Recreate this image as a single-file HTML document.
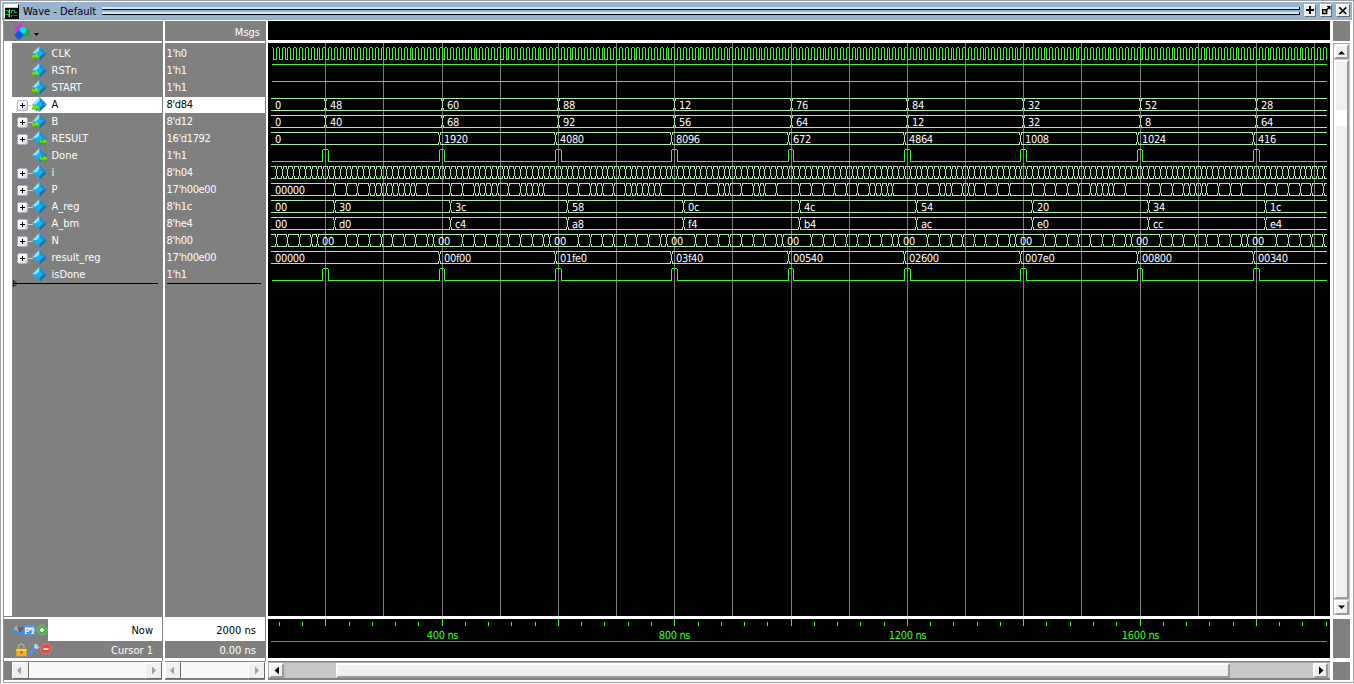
<!DOCTYPE html>
<html><head><meta charset="utf-8"><title>Wave - Default</title>
<style>
html,body{margin:0;padding:0;background:#fff;overflow:hidden}
#w{position:relative;width:1354px;height:684px;background:#fff;overflow:hidden;font-family:"DejaVu Sans Condensed","DejaVu Sans","Liberation Sans",sans-serif;font-stretch:condensed;font-size:11px;line-height:17px;color:#fff}
#w div{position:absolute;box-sizing:border-box}
.g{background:#808080}
.k{background:#000}
.wh{background:#fff}
.t{white-space:nowrap;height:17px}
.sel{background:#fff}
.wv{position:absolute;left:0;top:0}
.ic{display:block}
.dia{width:16px;height:16px}
.pm{width:11px;height:11px;border:1px solid #a9b1c6;border-radius:2px;background:linear-gradient(135deg,#fff 40%,#ccd3e6)}
.pm i{position:absolute;left:2px;top:4px;width:5px;height:1px;background:#000;display:block}
.pm b{position:absolute;left:4px;top:2px;width:1px;height:5px;background:#000;display:block}
.pl{width:5px;height:1px;background:#d0d0d0}
.btn{background:#f0f0f0;border:1px solid;border-color:#fff #6a6a6a #6a6a6a #fff}
.tr{background:#f8f8f8 repeating-conic-gradient(#fff 0 25%,#f0f0f0 0 50%) 0 0/2px 2px}
.b2{background:#f0f0f0;border:2px solid;border-color:#fff #9a9a9a #9a9a9a #fff}
</style></head><body><div id="w">
<svg width="0" height="0" style="position:absolute"><defs><linearGradient id="ag" x1="0" y1="0" x2="0" y2="1"><stop offset="0" stop-color="#d4ff30"/><stop offset=".5" stop-color="#58d800"/><stop offset="1" stop-color="#0a7a00"/></linearGradient></defs></svg>
<!-- frame -->
<div style="left:0;top:0;width:1354px;height:684px;background:#fff;border:1px solid #a0a0a0;border-right-color:#a8a8a8;border-bottom-color:#fff"></div>
<div class="wh" style="left:1px;top:1px;width:1352px;height:682px"></div>
<div style="left:3px;top:20px;width:1px;height:662px;background:#909090"></div>
<div style="left:3px;top:682px;width:1350px;height:1px;background:#a0a0a0"></div>
<!-- title bar -->
<div style="left:2px;top:2px;width:1350px;height:18px;background:#99b4d1"></div>
<div style="left:102px;top:7px;width:1198px;height:2px;background:#c4f0ff"></div>
<div style="left:102px;top:9px;width:1198px;height:1px;background:#000"></div>
<div style="left:102px;top:12px;width:1198px;height:2px;background:#c4f0ff"></div>
<div style="left:102px;top:14px;width:1198px;height:1px;background:#000"></div>
<div style="left:1299px;top:7px;width:1px;height:3px;background:#000"></div><div style="left:1299px;top:12px;width:1px;height:3px;background:#000"></div>
<div class="t" style="left:23px;top:3px;color:#000;line-height:18px;height:18px">Wave - Default</div>
<!-- title icon -->
<div style="left:4px;top:4px;width:15px;height:15px;background:#000;border:1px solid #fff;border-right-color:#000;border-bottom-color:#000">
<svg width="13" height="13" viewBox="0 0 13 13" style="display:block" shape-rendering="crispEdges"><rect width="13" height="2" fill="#fff"/><rect y="2" width="13" height="1" fill="#c8c8c8"/><path d="M0 5.500h3v2h2M0 9.500h3v2" fill="none" stroke="#00b040"/><path d="M4.500 4v8" stroke="#30e0f0"/><path d="M6 7.500v-2h3v2h3M6 9.500v2h1" fill="none" stroke="#00b040"/><path d="M7 10.500h5" stroke="#5028f0"/></svg></div>
<!-- title buttons -->
<div class="btn" style="left:1304px;top:4px;width:12px;height:13px"></div>
<div class="btn" style="left:1320px;top:4px;width:12px;height:13px"></div>
<div class="btn" style="left:1336px;top:4px;width:14px;height:13px"></div>
<svg class="wv" width="1354" height="24" viewBox="0 0 1354 24"><path d="M1306 9h8v2h-8zM1309 6h2v8h-2z" fill="#000" shape-rendering="crispEdges"/>
<path d="M1322.700 9.700h4v3.800h-4z" fill="none" stroke="#000" stroke-width="1.400"/><path d="M1325 11.500l4.500-4.500" fill="none" stroke="#000" stroke-width="1.500"/><path d="M1326.500 6h4v4z" fill="#000"/>
<path d="M1339.300 7.300l7 6.700M1346.300 7.300l-7 6.700" stroke="#000" stroke-width="1.600" fill="none"/></svg>
<!-- panels -->
<div class="g" style="left:4px;top:21px;width:158px;height:20px"></div>
<div class="g" style="left:12px;top:43px;width:150px;height:573px"></div>
<div class="g" style="left:162px;top:21px;width:1px;height:640px"></div>
<div class="g" style="left:165px;top:21px;width:100px;height:20px"></div>
<div class="g" style="left:165px;top:43px;width:100px;height:573px"></div>
<div class="g" style="left:265px;top:21px;width:1px;height:640px"></div>
<div class="k" style="left:268px;top:21px;width:1062px;height:19px"></div>
<div class="k" style="left:268px;top:43px;width:1062px;height:573px"></div>
<div class="k" style="left:268px;top:619px;width:1062px;height:39px"></div>
<div class="g" style="left:1333px;top:21px;width:17px;height:20px"></div>
<div class="g" style="left:1333px;top:619px;width:17px;height:39px"></div>
<div class="g" style="left:1333px;top:662px;width:17px;height:18px"></div>
<!-- header content -->
<div class="t" style="left:165px;top:24px;width:95px;text-align:right">Msgs</div>
<svg class="wv" width="60" height="44" viewBox="0 0 60 44"><polygon points="20.3,23.700 23.200,26.400 17,31.800 14,29.700" fill="#d828e8"/><rect x="22" y="29.300" width="8" height="7.500" fill="#1ca84c"/><circle cx="23" cy="30.200" r="3.300" fill="#00e4f4" stroke="#6c98b4" stroke-width=".7"/><polygon points="19,30.200 23.900,35.100 19,40 14,35.100" fill="#0858f0"/><polygon points="34,33 39,33 36.500,36" fill="#000"/></svg>
<!-- bottom-left panel -->
<div class="g" style="left:4px;top:616px;width:158px;height:1px"></div>
<div class="g" style="left:165px;top:616px;width:100px;height:1px"></div>
<div class="g" style="left:4px;top:619px;width:158px;height:39px"></div>
<div class="g" style="left:165px;top:619px;width:100px;height:39px"></div>
<div class="wh" style="left:48px;top:619px;width:114px;height:22px"></div>
<div class="wh" style="left:165px;top:619px;width:100px;height:22px"></div>
<div class="t" style="left:48px;top:622px;width:105px;text-align:right;color:#000">Now</div>
<div class="t" style="left:165px;top:622px;width:91px;text-align:right;color:#000">2000 ns</div>
<div class="t" style="left:48px;top:642px;width:105px;text-align:right">Cursor 1</div>
<div class="t" style="left:165px;top:642px;width:91px;text-align:right">0.00 ns</div>
<svg class="wv" style="left:12px;top:620px" width="40" height="38" viewBox="0 0 40 38">
<text x="1.500" y="11" font-size="7" font-weight="bold" fill="#b4b4b4" font-family='"DejaVu Sans Condensed","DejaVu Sans","Liberation Sans",sans-serif'>A</text><text x="6" y="11.500" font-size="7" font-weight="bold" fill="#4a4a4a" font-family='"DejaVu Sans Condensed","DejaVu Sans","Liberation Sans",sans-serif'>V</text>
<path d="M1.500 12.500h9" stroke="#3a8cf0" stroke-width="1.300"/><path d="M3.500 10.500l-2.200 2l2.200 2M8.500 10.500l2.200 2l-2.200 2" stroke="#3a8cf0" fill="none" stroke-width="1.200"/>
<rect x="12.500" y="5.500" width="10" height="9" fill="#e8f0fa" stroke="#5a90e0"/><rect x="12.500" y="5.500" width="10" height="2" fill="#5a90e0"/><path d="M14 10h3M14 12.500h3" stroke="#6a9ae0"/><path d="M15.500 15l4-4" stroke="#5a8ee0" stroke-width="3" stroke-linecap="round"/><circle cx="21" cy="10" r="1.800" fill="#d8d8d8"/>
<circle cx="30" cy="10" r="5" fill="#4cb04c" stroke="#7cc87c" stroke-width=".8"/><path d="M28 10h4M30 8v4" stroke="#fff" stroke-width="1.800"/>
<path d="M6.500 30v-3a2.800 2.800 0 0 1 5.600 0v1" fill="none" stroke="#b0b0b0" stroke-width="1.300"/><rect x="4.500" y="29" width="10" height="7" fill="#f0b428" stroke="#e8a010" stroke-width=".6"/><rect x="4.500" y="29" width="10" height="2" fill="#f8d060"/><rect x="8.500" y="31" width="2" height="3" fill="#a87000"/>
<path d="M17.500 34l6-6" stroke="#5a8ee0" stroke-width="3.400" stroke-linecap="round"/><path d="M23 28l2.500-3" stroke="#d8d8d8" stroke-width="2"/><path d="M24 24a2.200 2.200 0 1 0 3 3" fill="none" stroke="#d8d8d8" stroke-width="1.400"/>
<circle cx="34" cy="29" r="5" fill="#e8483c" stroke="#f07a70" stroke-width=".8"/><rect x="31.500" y="28.200" width="5" height="1.700" fill="#fff"/>
</svg>
<!-- scrollbars bottom -->
<div class="g" style="left:4px;top:661px;width:158px;height:19px"></div>
<div class="g" style="left:165px;top:661px;width:100px;height:19px"></div>
<div class="g" style="left:268px;top:661px;width:1062px;height:19px"></div>
<div class="tr" style="left:12px;top:662px;width:150px;height:16px"></div>
<div class="btn" style="left:12px;top:662px;width:17px;height:17px"></div>
<div class="btn" style="left:145px;top:662px;width:17px;height:17px"></div>
<div class="tr" style="left:165px;top:662px;width:100px;height:16px"></div>
<div class="btn" style="left:165px;top:662px;width:16px;height:17px"></div>
<div class="btn" style="left:248px;top:662px;width:17px;height:17px"></div>
<div style="left:268px;top:662px;width:1062px;height:16px;background:#c8c8c8;border-top:1px solid #a8a8a8;border-left:1px solid #a8a8a8"></div>
<div class="b2" style="left:269px;top:663px;width:15px;height:15px"></div>
<div class="b2" style="left:1313px;top:663px;width:15px;height:15px"></div>
<div class="b2" style="left:336px;top:663px;width:894px;height:15px"></div>
<div style="left:285px;top:663px;width:1px;height:15px;background:#f8c800"></div>

<!-- vertical scrollbar -->
<div style="left:1333px;top:43px;width:17px;height:572px;background:#c8c8c8;border-top:1px solid #a8a8a8;border-left:1px solid #a8a8a8"></div>
<div class="b2" style="left:1334px;top:44px;width:15px;height:15px"></div>
<div class="b2" style="left:1334px;top:60px;width:15px;height:539px"></div>
<div class="b2" style="left:1334px;top:600px;width:15px;height:15px"></div>
<div class="wh" style="left:1336px;top:110px;width:11px;height:16px"></div>
<svg class="wv" width="1354" height="684" viewBox="0 0 1354 684"><g fill="#a0a0a0"><polygon points="17,670.5 21,666.500 21,674.500"/><polygon points="156,670.5 152,666.500 152,674.500"/><polygon points="170,670.5 174,666.500 174,674.500"/><polygon points="259,670.5 255,666.500 255,674.500"/></g>
<g fill="#000"><polygon points="274.500,670.500 279,666.500 279,674.500"/><polygon points="1323.500,670.500 1319,666.500 1319,674.500"/><polygon points="1338,54.500 1345,54.500 1341.500,51"/><polygon points="1338,605.500 1345,605.500 1341.500,609"/></g></svg>
<!-- rows -->
<div class="dia" style="left:32px;top:46px"><svg class="ic" width="16" height="16" viewBox="0 0 16 16">
<polygon points="7.5,0 7.5,7.5 0,7.5" fill="#9adff8"/>
<polygon points="7.5,0 15,7.5 7.5,7.5" fill="#1c8fd4"/>
<polygon points="0,7.5 7.5,7.5 7.5,15" fill="#2ba2de"/>
<polygon points="7.5,7.5 15,7.5 7.5,15" fill="#1374b4"/>
<polygon points="7.5,3.9 11.100,7.5 7.5,11.100 3.900,7.5" fill="#12b6ee"/>
<path d="M0 9.6h3.8V7.6l3.6 3.4l-3.6 3.9V12.6H0z" fill="url(#ag)"/></svg></div>
<div class="t" style="left:51.5px;top:45px;color:#fff">CLK</div>
<div class="t" style="left:166.5px;top:45px;color:#fff;letter-spacing:-0.35px">1'h0</div>
<div class="dia" style="left:32px;top:63px"><svg class="ic" width="16" height="16" viewBox="0 0 16 16">
<polygon points="7.5,0 7.5,7.5 0,7.5" fill="#9adff8"/>
<polygon points="7.5,0 15,7.5 7.5,7.5" fill="#1c8fd4"/>
<polygon points="0,7.5 7.5,7.5 7.5,15" fill="#2ba2de"/>
<polygon points="7.5,7.5 15,7.5 7.5,15" fill="#1374b4"/>
<polygon points="7.5,3.9 11.100,7.5 7.5,11.100 3.900,7.5" fill="#12b6ee"/>
<path d="M0 9.6h3.8V7.6l3.6 3.4l-3.6 3.9V12.6H0z" fill="url(#ag)"/></svg></div>
<div class="t" style="left:51.5px;top:62px;color:#fff">RSTn</div>
<div class="t" style="left:166.5px;top:62px;color:#fff;letter-spacing:-0.35px">1'h1</div>
<div class="dia" style="left:32px;top:80px"><svg class="ic" width="16" height="16" viewBox="0 0 16 16">
<polygon points="7.5,0 7.5,7.5 0,7.5" fill="#9adff8"/>
<polygon points="7.5,0 15,7.5 7.5,7.5" fill="#1c8fd4"/>
<polygon points="0,7.5 7.5,7.5 7.5,15" fill="#2ba2de"/>
<polygon points="7.5,7.5 15,7.5 7.5,15" fill="#1374b4"/>
<polygon points="7.5,3.9 11.100,7.5 7.5,11.100 3.900,7.5" fill="#12b6ee"/>
<path d="M0 9.6h3.8V7.6l3.6 3.4l-3.6 3.9V12.6H0z" fill="url(#ag)"/></svg></div>
<div class="t" style="left:51.5px;top:79px;color:#fff">START</div>
<div class="t" style="left:166.5px;top:79px;color:#fff;letter-spacing:-0.35px">1'h1</div>
<div class="sel" style="left:12px;top:97px;width:150px;height:16px"></div>
<div class="sel" style="left:165px;top:97px;width:100px;height:16px"></div>
<div class="pm" style="left:17px;top:100px"><i></i><b></b></div><div class="pl" style="left:28px;top:105px"></div>
<div class="dia" style="left:32px;top:97px"><svg class="ic" width="16" height="16" viewBox="0 0 16 16">
<polygon points="7.5,0 7.5,7.5 0,7.5" fill="#9adff8"/>
<polygon points="7.5,0 15,7.5 7.5,7.5" fill="#1c8fd4"/>
<polygon points="0,7.5 7.5,7.5 7.5,15" fill="#2ba2de"/>
<polygon points="7.5,7.5 15,7.5 7.5,15" fill="#1374b4"/>
<polygon points="7.5,3.9 11.100,7.5 7.5,11.100 3.900,7.5" fill="#12b6ee"/>
<path d="M0 9.6h3.8V7.6l3.6 3.4l-3.6 3.9V12.6H0z" fill="url(#ag)"/></svg></div>
<div class="t" style="left:51.5px;top:96px;color:#000">A</div>
<div class="t" style="left:166.5px;top:96px;color:#000;letter-spacing:-0.35px">8'd84</div>
<div class="pm" style="left:17px;top:117px"><i></i><b></b></div><div class="pl" style="left:28px;top:122px"></div>
<div class="dia" style="left:32px;top:114px"><svg class="ic" width="16" height="16" viewBox="0 0 16 16">
<polygon points="7.5,0 7.5,7.5 0,7.5" fill="#9adff8"/>
<polygon points="7.5,0 15,7.5 7.5,7.5" fill="#1c8fd4"/>
<polygon points="0,7.5 7.5,7.5 7.5,15" fill="#2ba2de"/>
<polygon points="7.5,7.5 15,7.5 7.5,15" fill="#1374b4"/>
<polygon points="7.5,3.9 11.100,7.5 7.5,11.100 3.900,7.5" fill="#12b6ee"/>
<path d="M0 9.6h3.8V7.6l3.6 3.4l-3.6 3.9V12.6H0z" fill="url(#ag)"/></svg></div>
<div class="t" style="left:51.5px;top:113px;color:#fff">B</div>
<div class="t" style="left:166.5px;top:113px;color:#fff;letter-spacing:-0.35px">8'd12</div>
<div class="pm" style="left:17px;top:134px"><i></i><b></b></div><div class="pl" style="left:28px;top:139px"></div>
<div class="dia" style="left:32px;top:131px"><svg class="ic" width="16" height="16" viewBox="0 0 16 16">
<polygon points="7.5,0 7.5,7.5 0,7.5" fill="#9adff8"/>
<polygon points="7.5,0 15,7.5 7.5,7.5" fill="#1c8fd4"/>
<polygon points="0,7.5 7.5,7.5 7.5,15" fill="#2ba2de"/>
<polygon points="7.5,7.5 15,7.5 7.5,15" fill="#1374b4"/>
<polygon points="7.5,3.9 11.100,7.5 7.5,11.100 3.900,7.5" fill="#12b6ee"/>
<path d="M8 9.600h3.800V7.600l3.600 3.400l-3.600 3.900V12.600H8z" fill="url(#ag)"/></svg></div>
<div class="t" style="left:51.5px;top:130px;color:#fff">RESULT</div>
<div class="t" style="left:166.5px;top:130px;color:#fff;letter-spacing:-0.35px">16'd1792</div>
<div class="dia" style="left:32px;top:148px"><svg class="ic" width="16" height="16" viewBox="0 0 16 16">
<polygon points="7.5,0 7.5,7.5 0,7.5" fill="#9adff8"/>
<polygon points="7.5,0 15,7.5 7.5,7.5" fill="#1c8fd4"/>
<polygon points="0,7.5 7.5,7.5 7.5,15" fill="#2ba2de"/>
<polygon points="7.5,7.5 15,7.5 7.5,15" fill="#1374b4"/>
<polygon points="7.5,3.9 11.100,7.5 7.5,11.100 3.900,7.5" fill="#12b6ee"/>
<path d="M8 9.600h3.800V7.600l3.600 3.400l-3.600 3.900V12.600H8z" fill="url(#ag)"/></svg></div>
<div class="t" style="left:51.5px;top:147px;color:#fff">Done</div>
<div class="t" style="left:166.5px;top:147px;color:#fff;letter-spacing:-0.35px">1'h1</div>
<div class="pm" style="left:17px;top:168px"><i></i><b></b></div><div class="pl" style="left:28px;top:173px"></div>
<div class="dia" style="left:32px;top:165px"><svg class="ic" width="16" height="16" viewBox="0 0 16 16">
<polygon points="7.5,0 7.5,7.5 0,7.5" fill="#9adff8"/>
<polygon points="7.5,0 15,7.5 7.5,7.5" fill="#1c8fd4"/>
<polygon points="0,7.5 7.5,7.5 7.5,15" fill="#2ba2de"/>
<polygon points="7.5,7.5 15,7.5 7.5,15" fill="#1374b4"/>
<polygon points="7.5,3.9 11.100,7.5 7.5,11.100 3.900,7.5" fill="#12b6ee"/>
</svg></div>
<div class="t" style="left:51.5px;top:164px;color:#fff">i</div>
<div class="t" style="left:166.5px;top:164px;color:#fff;letter-spacing:-0.35px">8'h04</div>
<div class="pm" style="left:17px;top:185px"><i></i><b></b></div><div class="pl" style="left:28px;top:190px"></div>
<div class="dia" style="left:32px;top:182px"><svg class="ic" width="16" height="16" viewBox="0 0 16 16">
<polygon points="7.5,0 7.5,7.5 0,7.5" fill="#9adff8"/>
<polygon points="7.5,0 15,7.5 7.5,7.5" fill="#1c8fd4"/>
<polygon points="0,7.5 7.5,7.5 7.5,15" fill="#2ba2de"/>
<polygon points="7.5,7.5 15,7.5 7.5,15" fill="#1374b4"/>
<polygon points="7.5,3.9 11.100,7.5 7.5,11.100 3.900,7.5" fill="#12b6ee"/>
</svg></div>
<div class="t" style="left:51.5px;top:181px;color:#fff">P</div>
<div class="t" style="left:166.5px;top:181px;color:#fff;letter-spacing:-0.35px">17'h00e00</div>
<div class="pm" style="left:17px;top:202px"><i></i><b></b></div><div class="pl" style="left:28px;top:207px"></div>
<div class="dia" style="left:32px;top:199px"><svg class="ic" width="16" height="16" viewBox="0 0 16 16">
<polygon points="7.5,0 7.5,7.5 0,7.5" fill="#9adff8"/>
<polygon points="7.5,0 15,7.5 7.5,7.5" fill="#1c8fd4"/>
<polygon points="0,7.5 7.5,7.5 7.5,15" fill="#2ba2de"/>
<polygon points="7.5,7.5 15,7.5 7.5,15" fill="#1374b4"/>
<polygon points="7.5,3.9 11.100,7.5 7.5,11.100 3.900,7.5" fill="#12b6ee"/>
</svg></div>
<div class="t" style="left:51.5px;top:198px;color:#fff">A_reg</div>
<div class="t" style="left:166.5px;top:198px;color:#fff;letter-spacing:-0.35px">8'h1c</div>
<div class="pm" style="left:17px;top:219px"><i></i><b></b></div><div class="pl" style="left:28px;top:224px"></div>
<div class="dia" style="left:32px;top:216px"><svg class="ic" width="16" height="16" viewBox="0 0 16 16">
<polygon points="7.5,0 7.5,7.5 0,7.5" fill="#9adff8"/>
<polygon points="7.5,0 15,7.5 7.5,7.5" fill="#1c8fd4"/>
<polygon points="0,7.5 7.5,7.5 7.5,15" fill="#2ba2de"/>
<polygon points="7.5,7.5 15,7.5 7.5,15" fill="#1374b4"/>
<polygon points="7.5,3.9 11.100,7.5 7.5,11.100 3.900,7.5" fill="#12b6ee"/>
</svg></div>
<div class="t" style="left:51.5px;top:215px;color:#fff">A_bm</div>
<div class="t" style="left:166.5px;top:215px;color:#fff;letter-spacing:-0.35px">8'he4</div>
<div class="pm" style="left:17px;top:236px"><i></i><b></b></div><div class="pl" style="left:28px;top:241px"></div>
<div class="dia" style="left:32px;top:233px"><svg class="ic" width="16" height="16" viewBox="0 0 16 16">
<polygon points="7.5,0 7.5,7.5 0,7.5" fill="#9adff8"/>
<polygon points="7.5,0 15,7.5 7.5,7.5" fill="#1c8fd4"/>
<polygon points="0,7.5 7.5,7.5 7.5,15" fill="#2ba2de"/>
<polygon points="7.5,7.5 15,7.5 7.5,15" fill="#1374b4"/>
<polygon points="7.5,3.9 11.100,7.5 7.5,11.100 3.900,7.5" fill="#12b6ee"/>
</svg></div>
<div class="t" style="left:51.5px;top:232px;color:#fff">N</div>
<div class="t" style="left:166.5px;top:232px;color:#fff;letter-spacing:-0.35px">8'h00</div>
<div class="pm" style="left:17px;top:253px"><i></i><b></b></div><div class="pl" style="left:28px;top:258px"></div>
<div class="dia" style="left:32px;top:250px"><svg class="ic" width="16" height="16" viewBox="0 0 16 16">
<polygon points="7.5,0 7.5,7.5 0,7.5" fill="#9adff8"/>
<polygon points="7.5,0 15,7.5 7.5,7.5" fill="#1c8fd4"/>
<polygon points="0,7.5 7.5,7.5 7.5,15" fill="#2ba2de"/>
<polygon points="7.5,7.5 15,7.5 7.5,15" fill="#1374b4"/>
<polygon points="7.5,3.9 11.100,7.5 7.5,11.100 3.900,7.5" fill="#12b6ee"/>
</svg></div>
<div class="t" style="left:51.5px;top:249px;color:#fff">result_reg</div>
<div class="t" style="left:166.5px;top:249px;color:#fff;letter-spacing:-0.35px">17'h00e00</div>
<div class="dia" style="left:32px;top:267px"><svg class="ic" width="16" height="16" viewBox="0 0 16 16">
<polygon points="7.5,0 7.5,7.5 0,7.5" fill="#9adff8"/>
<polygon points="7.5,0 15,7.5 7.5,7.5" fill="#1c8fd4"/>
<polygon points="0,7.5 7.5,7.5 7.5,15" fill="#2ba2de"/>
<polygon points="7.5,7.5 15,7.5 7.5,15" fill="#1374b4"/>
<polygon points="7.5,3.9 11.100,7.5 7.5,11.100 3.900,7.5" fill="#12b6ee"/>
</svg></div>
<div class="t" style="left:51.5px;top:266px;color:#fff">isDone</div>
<div class="t" style="left:166.5px;top:266px;color:#fff;letter-spacing:-0.35px">1'h1</div>
<div style="left:14px;top:283px;width:144px;height:1px;background:#000"></div>
<div style="left:167px;top:283px;width:94px;height:1px;background:#000"></div>
<svg class="wv" style="left:13px;top:280px" width="5" height="7" viewBox="0 0 5 7"><path d="M.5.500v6l4-3z" fill="none" stroke="#000" stroke-width=".8"/></svg>
<svg class="wv" width="1354" height="684" viewBox="0 0 1354 684" shape-rendering="crispEdges">
<path fill="#7d7d7d" d="M325 43h1v573h-1zM383 43h1v573h-1zM442 43h1v573h-1zM500 43h1v573h-1zM558 43h1v573h-1zM616 43h1v573h-1zM674 43h1v573h-1zM732 43h1v573h-1zM791 43h1v573h-1zM849 43h1v573h-1zM907 43h1v573h-1zM965 43h1v573h-1zM1023 43h1v573h-1zM1081 43h1v573h-1zM1140 43h1v573h-1zM1198 43h1v573h-1zM1256 43h1v573h-1zM1314 43h1v573h-1z"/>
<path fill="#30ff18" d="M272 47h1v1h-1zM273 48h1v12h-1zM273 59h4v1h-4zM276 48h1v12h-1zM277 47h2v1h-2zM279 48h1v12h-1zM279 59h4v1h-4zM282 48h1v12h-1zM283 47h2v1h-2zM285 48h1v12h-1zM285 59h3v1h-3zM287 48h1v12h-1zM288 47h2v1h-2zM290 48h1v12h-1zM290 59h4v1h-4zM293 48h1v12h-1zM294 47h2v1h-2zM296 48h1v12h-1zM296 59h4v1h-4zM299 48h1v12h-1zM300 47h2v1h-2zM302 48h1v12h-1zM302 59h4v1h-4zM305 48h1v12h-1zM306 47h2v1h-2zM308 48h1v12h-1zM308 59h4v1h-4zM311 48h1v12h-1zM312 47h2v1h-2zM314 48h1v12h-1zM314 59h4v1h-4zM317 48h1v12h-1zM318 47h1v1h-1zM319 48h1v12h-1zM319 59h4v1h-4zM322 48h1v12h-1zM323 47h2v1h-2zM325 48h1v12h-1zM325 59h4v1h-4zM328 48h1v12h-1zM329 47h2v1h-2zM331 48h1v12h-1zM331 59h4v1h-4zM334 48h1v12h-1zM335 47h2v1h-2zM337 48h1v12h-1zM337 59h4v1h-4zM340 48h1v12h-1zM341 47h2v1h-2zM343 48h1v12h-1zM343 59h4v1h-4zM346 48h1v12h-1zM347 47h2v1h-2zM349 48h1v12h-1zM349 59h3v1h-3zM351 48h1v12h-1zM352 47h2v1h-2zM354 48h1v12h-1zM354 59h4v1h-4zM357 48h1v12h-1zM358 47h2v1h-2zM360 48h1v12h-1zM360 59h4v1h-4zM363 48h1v12h-1zM364 47h2v1h-2zM366 48h1v12h-1zM366 59h4v1h-4zM369 48h1v12h-1zM370 47h2v1h-2zM372 48h1v12h-1zM372 59h4v1h-4zM375 48h1v12h-1zM376 47h2v1h-2zM378 48h1v12h-1zM378 59h4v1h-4zM381 48h1v12h-1zM382 47h1v1h-1zM383 48h1v12h-1zM383 59h4v1h-4zM386 48h1v12h-1zM387 47h2v1h-2zM389 48h1v12h-1zM389 59h4v1h-4zM392 48h1v12h-1zM393 47h2v1h-2zM395 48h1v12h-1zM395 59h4v1h-4zM398 48h1v12h-1zM399 47h2v1h-2zM401 48h1v12h-1zM401 59h4v1h-4zM404 48h1v12h-1zM405 47h2v1h-2zM407 48h1v12h-1zM407 59h4v1h-4zM410 48h1v12h-1zM411 47h1v1h-1zM412 48h1v12h-1zM412 59h4v1h-4zM415 48h1v12h-1zM416 47h2v1h-2zM418 48h1v12h-1zM418 59h4v1h-4zM421 48h1v12h-1zM422 47h2v1h-2zM424 48h1v12h-1zM424 59h4v1h-4zM427 48h1v12h-1zM428 47h2v1h-2zM430 48h1v12h-1zM430 59h4v1h-4zM433 48h1v12h-1zM434 47h2v1h-2zM436 48h1v12h-1zM436 59h4v1h-4zM439 48h1v12h-1zM440 47h2v1h-2zM442 48h1v12h-1zM442 59h3v1h-3zM444 48h1v12h-1zM445 47h2v1h-2zM447 48h1v12h-1zM447 59h4v1h-4zM450 48h1v12h-1zM451 47h2v1h-2zM453 48h1v12h-1zM453 59h4v1h-4zM456 48h1v12h-1zM457 47h2v1h-2zM459 48h1v12h-1zM459 59h4v1h-4zM462 48h1v12h-1zM463 47h2v1h-2zM465 48h1v12h-1zM465 59h4v1h-4zM468 48h1v12h-1zM469 47h2v1h-2zM471 48h1v12h-1zM471 59h4v1h-4zM474 48h1v12h-1zM475 47h1v1h-1zM476 48h1v12h-1zM476 59h4v1h-4zM479 48h1v12h-1zM480 47h2v1h-2zM482 48h1v12h-1zM482 59h4v1h-4zM485 48h1v12h-1zM486 47h2v1h-2zM488 48h1v12h-1zM488 59h4v1h-4zM491 48h1v12h-1zM492 47h2v1h-2zM494 48h1v12h-1zM494 59h4v1h-4zM497 48h1v12h-1zM498 47h2v1h-2zM500 48h1v12h-1zM500 59h4v1h-4zM503 48h1v12h-1zM504 47h2v1h-2zM506 48h1v12h-1zM506 59h3v1h-3zM508 48h1v12h-1zM509 47h2v1h-2zM511 48h1v12h-1zM511 59h4v1h-4zM514 48h1v12h-1zM515 47h2v1h-2zM517 48h1v12h-1zM517 59h4v1h-4zM520 48h1v12h-1zM521 47h2v1h-2zM523 48h1v12h-1zM523 59h4v1h-4zM526 48h1v12h-1zM527 47h2v1h-2zM529 48h1v12h-1zM529 59h4v1h-4zM532 48h1v12h-1zM533 47h2v1h-2zM535 48h1v12h-1zM535 59h4v1h-4zM538 48h1v12h-1zM539 47h1v1h-1zM540 48h1v12h-1zM540 59h4v1h-4zM543 48h1v12h-1zM544 47h2v1h-2zM546 48h1v12h-1zM546 59h4v1h-4zM549 48h1v12h-1zM550 47h2v1h-2zM552 48h1v12h-1zM552 59h4v1h-4zM555 48h1v12h-1zM556 47h2v1h-2zM558 48h1v12h-1zM558 59h4v1h-4zM561 48h1v12h-1zM562 47h2v1h-2zM564 48h1v12h-1zM564 59h4v1h-4zM567 48h1v12h-1zM568 47h2v1h-2zM570 48h1v12h-1zM570 59h3v1h-3zM572 48h1v12h-1zM573 47h2v1h-2zM575 48h1v12h-1zM575 59h4v1h-4zM578 48h1v12h-1zM579 47h2v1h-2zM581 48h1v12h-1zM581 59h4v1h-4zM584 48h1v12h-1zM585 47h2v1h-2zM587 48h1v12h-1zM587 59h4v1h-4zM590 48h1v12h-1zM591 47h2v1h-2zM593 48h1v12h-1zM593 59h4v1h-4zM596 48h1v12h-1zM597 47h2v1h-2zM599 48h1v12h-1zM599 59h4v1h-4zM602 48h1v12h-1zM603 47h1v1h-1zM604 48h1v12h-1zM604 59h4v1h-4zM607 48h1v12h-1zM608 47h2v1h-2zM610 48h1v12h-1zM610 59h4v1h-4zM613 48h1v12h-1zM614 47h2v1h-2zM616 48h1v12h-1zM616 59h4v1h-4zM619 48h1v12h-1zM620 47h2v1h-2zM622 48h1v12h-1zM622 59h4v1h-4zM625 48h1v12h-1zM626 47h2v1h-2zM628 48h1v12h-1zM628 59h4v1h-4zM631 48h1v12h-1zM632 47h2v1h-2zM634 48h1v12h-1zM634 59h3v1h-3zM636 48h1v12h-1zM637 47h2v1h-2zM639 48h1v12h-1zM639 59h4v1h-4zM642 48h1v12h-1zM643 47h2v1h-2zM645 48h1v12h-1zM645 59h4v1h-4zM648 48h1v12h-1zM649 47h2v1h-2zM651 48h1v12h-1zM651 59h4v1h-4zM654 48h1v12h-1zM655 47h2v1h-2zM657 48h1v12h-1zM657 59h4v1h-4zM660 48h1v12h-1zM661 47h2v1h-2zM663 48h1v12h-1zM663 59h4v1h-4zM666 48h1v12h-1zM667 47h1v1h-1zM668 48h1v12h-1zM668 59h4v1h-4zM671 48h1v12h-1zM672 47h2v1h-2zM674 48h1v12h-1zM674 59h4v1h-4zM677 48h1v12h-1zM678 47h2v1h-2zM680 48h1v12h-1zM680 59h4v1h-4zM683 48h1v12h-1zM684 47h2v1h-2zM686 48h1v12h-1zM686 59h4v1h-4zM689 48h1v12h-1zM690 47h2v1h-2zM692 48h1v12h-1zM692 59h4v1h-4zM695 48h1v12h-1zM696 47h2v1h-2zM698 48h1v12h-1zM698 59h3v1h-3zM700 48h1v12h-1zM701 47h2v1h-2zM703 48h1v12h-1zM703 59h4v1h-4zM706 48h1v12h-1zM707 47h2v1h-2zM709 48h1v12h-1zM709 59h4v1h-4zM712 48h1v12h-1zM713 47h2v1h-2zM715 48h1v12h-1zM715 59h4v1h-4zM718 48h1v12h-1zM719 47h2v1h-2zM721 48h1v12h-1zM721 59h4v1h-4zM724 48h1v12h-1zM725 47h2v1h-2zM727 48h1v12h-1zM727 59h3v1h-3zM729 48h1v12h-1zM730 47h2v1h-2zM732 48h1v12h-1zM732 59h4v1h-4zM735 48h1v12h-1zM736 47h2v1h-2zM738 48h1v12h-1zM738 59h4v1h-4zM741 48h1v12h-1zM742 47h2v1h-2zM744 48h1v12h-1zM744 59h4v1h-4zM747 48h1v12h-1zM748 47h2v1h-2zM750 48h1v12h-1zM750 59h4v1h-4zM753 48h1v12h-1zM754 47h2v1h-2zM756 48h1v12h-1zM756 59h4v1h-4zM759 48h1v12h-1zM760 47h1v1h-1zM761 48h1v12h-1zM761 59h4v1h-4zM764 48h1v12h-1zM765 47h2v1h-2zM767 48h1v12h-1zM767 59h4v1h-4zM770 48h1v12h-1zM771 47h2v1h-2zM773 48h1v12h-1zM773 59h4v1h-4zM776 48h1v12h-1zM777 47h2v1h-2zM779 48h1v12h-1zM779 59h4v1h-4zM782 48h1v12h-1zM783 47h2v1h-2zM785 48h1v12h-1zM785 59h4v1h-4zM788 48h1v12h-1zM789 47h2v1h-2zM791 48h1v12h-1zM791 59h3v1h-3zM793 48h1v12h-1zM794 47h2v1h-2zM796 48h1v12h-1zM796 59h4v1h-4zM799 48h1v12h-1zM800 47h2v1h-2zM802 48h1v12h-1zM802 59h4v1h-4zM805 48h1v12h-1zM806 47h2v1h-2zM808 48h1v12h-1zM808 59h4v1h-4zM811 48h1v12h-1zM812 47h2v1h-2zM814 48h1v12h-1zM814 59h4v1h-4zM817 48h1v12h-1zM818 47h2v1h-2zM820 48h1v12h-1zM820 59h4v1h-4zM823 48h1v12h-1zM824 47h1v1h-1zM825 48h1v12h-1zM825 59h4v1h-4zM828 48h1v12h-1zM829 47h2v1h-2zM831 48h1v12h-1zM831 59h4v1h-4zM834 48h1v12h-1zM835 47h2v1h-2zM837 48h1v12h-1zM837 59h4v1h-4zM840 48h1v12h-1zM841 47h2v1h-2zM843 48h1v12h-1zM843 59h4v1h-4zM846 48h1v12h-1zM847 47h2v1h-2zM849 48h1v12h-1zM849 59h4v1h-4zM852 48h1v12h-1zM853 47h2v1h-2zM855 48h1v12h-1zM855 59h3v1h-3zM857 48h1v12h-1zM858 47h2v1h-2zM860 48h1v12h-1zM860 59h4v1h-4zM863 48h1v12h-1zM864 47h2v1h-2zM866 48h1v12h-1zM866 59h4v1h-4zM869 48h1v12h-1zM870 47h2v1h-2zM872 48h1v12h-1zM872 59h4v1h-4zM875 48h1v12h-1zM876 47h2v1h-2zM878 48h1v12h-1zM878 59h4v1h-4zM881 48h1v12h-1zM882 47h2v1h-2zM884 48h1v12h-1zM884 59h4v1h-4zM887 48h1v12h-1zM888 47h1v1h-1zM889 48h1v12h-1zM889 59h4v1h-4zM892 48h1v12h-1zM893 47h2v1h-2zM895 48h1v12h-1zM895 59h4v1h-4zM898 48h1v12h-1zM899 47h2v1h-2zM901 48h1v12h-1zM901 59h4v1h-4zM904 48h1v12h-1zM905 47h2v1h-2zM907 48h1v12h-1zM907 59h4v1h-4zM910 48h1v12h-1zM911 47h2v1h-2zM913 48h1v12h-1zM913 59h4v1h-4zM916 48h1v12h-1zM917 47h2v1h-2zM919 48h1v12h-1zM919 59h3v1h-3zM921 48h1v12h-1zM922 47h2v1h-2zM924 48h1v12h-1zM924 59h4v1h-4zM927 48h1v12h-1zM928 47h2v1h-2zM930 48h1v12h-1zM930 59h4v1h-4zM933 48h1v12h-1zM934 47h2v1h-2zM936 48h1v12h-1zM936 59h4v1h-4zM939 48h1v12h-1zM940 47h2v1h-2zM942 48h1v12h-1zM942 59h4v1h-4zM945 48h1v12h-1zM946 47h2v1h-2zM948 48h1v12h-1zM948 59h4v1h-4zM951 48h1v12h-1zM952 47h1v1h-1zM953 48h1v12h-1zM953 59h4v1h-4zM956 48h1v12h-1zM957 47h2v1h-2zM959 48h1v12h-1zM959 59h4v1h-4zM962 48h1v12h-1zM963 47h2v1h-2zM965 48h1v12h-1zM965 59h4v1h-4zM968 48h1v12h-1zM969 47h2v1h-2zM971 48h1v12h-1zM971 59h4v1h-4zM974 48h1v12h-1zM975 47h2v1h-2zM977 48h1v12h-1zM977 59h4v1h-4zM980 48h1v12h-1zM981 47h2v1h-2zM983 48h1v12h-1zM983 59h3v1h-3zM985 48h1v12h-1zM986 47h2v1h-2zM988 48h1v12h-1zM988 59h4v1h-4zM991 48h1v12h-1zM992 47h2v1h-2zM994 48h1v12h-1zM994 59h4v1h-4zM997 48h1v12h-1zM998 47h2v1h-2zM1000 48h1v12h-1zM1000 59h4v1h-4zM1003 48h1v12h-1zM1004 47h2v1h-2zM1006 48h1v12h-1zM1006 59h4v1h-4zM1009 48h1v12h-1zM1010 47h2v1h-2zM1012 48h1v12h-1zM1012 59h4v1h-4zM1015 48h1v12h-1zM1016 47h1v1h-1zM1017 48h1v12h-1zM1017 59h4v1h-4zM1020 48h1v12h-1zM1021 47h2v1h-2zM1023 48h1v12h-1zM1023 59h4v1h-4zM1026 48h1v12h-1zM1027 47h2v1h-2zM1029 48h1v12h-1zM1029 59h4v1h-4zM1032 48h1v12h-1zM1033 47h2v1h-2zM1035 48h1v12h-1zM1035 59h4v1h-4zM1038 48h1v12h-1zM1039 47h2v1h-2zM1041 48h1v12h-1zM1041 59h4v1h-4zM1044 48h1v12h-1zM1045 47h1v1h-1zM1046 48h1v12h-1zM1046 59h4v1h-4zM1049 48h1v12h-1zM1050 47h2v1h-2zM1052 48h1v12h-1zM1052 59h4v1h-4zM1055 48h1v12h-1zM1056 47h2v1h-2zM1058 48h1v12h-1zM1058 59h4v1h-4zM1061 48h1v12h-1zM1062 47h2v1h-2zM1064 48h1v12h-1zM1064 59h4v1h-4zM1067 48h1v12h-1zM1068 47h2v1h-2zM1070 48h1v12h-1zM1070 59h4v1h-4zM1073 48h1v12h-1zM1074 47h2v1h-2zM1076 48h1v12h-1zM1076 59h3v1h-3zM1078 48h1v12h-1zM1079 47h2v1h-2zM1081 48h1v12h-1zM1081 59h4v1h-4zM1084 48h1v12h-1zM1085 47h2v1h-2zM1087 48h1v12h-1zM1087 59h4v1h-4zM1090 48h1v12h-1zM1091 47h2v1h-2zM1093 48h1v12h-1zM1093 59h4v1h-4zM1096 48h1v12h-1zM1097 47h2v1h-2zM1099 48h1v12h-1zM1099 59h4v1h-4zM1102 48h1v12h-1zM1103 47h2v1h-2zM1105 48h1v12h-1zM1105 59h4v1h-4zM1108 48h1v12h-1zM1109 47h1v1h-1zM1110 48h1v12h-1zM1110 59h4v1h-4zM1113 48h1v12h-1zM1114 47h2v1h-2zM1116 48h1v12h-1zM1116 59h4v1h-4zM1119 48h1v12h-1zM1120 47h2v1h-2zM1122 48h1v12h-1zM1122 59h4v1h-4zM1125 48h1v12h-1zM1126 47h2v1h-2zM1128 48h1v12h-1zM1128 59h4v1h-4zM1131 48h1v12h-1zM1132 47h2v1h-2zM1134 48h1v12h-1zM1134 59h4v1h-4zM1137 48h1v12h-1zM1138 47h2v1h-2zM1140 48h1v12h-1zM1140 59h3v1h-3zM1142 48h1v12h-1zM1143 47h2v1h-2zM1145 48h1v12h-1zM1145 59h4v1h-4zM1148 48h1v12h-1zM1149 47h2v1h-2zM1151 48h1v12h-1zM1151 59h4v1h-4zM1154 48h1v12h-1zM1155 47h2v1h-2zM1157 48h1v12h-1zM1157 59h4v1h-4zM1160 48h1v12h-1zM1161 47h2v1h-2zM1163 48h1v12h-1zM1163 59h4v1h-4zM1166 48h1v12h-1zM1167 47h2v1h-2zM1169 48h1v12h-1zM1169 59h4v1h-4zM1172 48h1v12h-1zM1173 47h1v1h-1zM1174 48h1v12h-1zM1174 59h4v1h-4zM1177 48h1v12h-1zM1178 47h2v1h-2zM1180 48h1v12h-1zM1180 59h4v1h-4zM1183 48h1v12h-1zM1184 47h2v1h-2zM1186 48h1v12h-1zM1186 59h4v1h-4zM1189 48h1v12h-1zM1190 47h2v1h-2zM1192 48h1v12h-1zM1192 59h4v1h-4zM1195 48h1v12h-1zM1196 47h2v1h-2zM1198 48h1v12h-1zM1198 59h4v1h-4zM1201 48h1v12h-1zM1202 47h2v1h-2zM1204 48h1v12h-1zM1204 59h3v1h-3zM1206 48h1v12h-1zM1207 47h2v1h-2zM1209 48h1v12h-1zM1209 59h4v1h-4zM1212 48h1v12h-1zM1213 47h2v1h-2zM1215 48h1v12h-1zM1215 59h4v1h-4zM1218 48h1v12h-1zM1219 47h2v1h-2zM1221 48h1v12h-1zM1221 59h4v1h-4zM1224 48h1v12h-1zM1225 47h2v1h-2zM1227 48h1v12h-1zM1227 59h4v1h-4zM1230 48h1v12h-1zM1231 47h2v1h-2zM1233 48h1v12h-1zM1233 59h4v1h-4zM1236 48h1v12h-1zM1237 47h1v1h-1zM1238 48h1v12h-1zM1238 59h4v1h-4zM1241 48h1v12h-1zM1242 47h2v1h-2zM1244 48h1v12h-1zM1244 59h4v1h-4zM1247 48h1v12h-1zM1248 47h2v1h-2zM1250 48h1v12h-1zM1250 59h4v1h-4zM1253 48h1v12h-1zM1254 47h2v1h-2zM1256 48h1v12h-1zM1256 59h4v1h-4zM1259 48h1v12h-1zM1260 47h2v1h-2zM1262 48h1v12h-1zM1262 59h4v1h-4zM1265 48h1v12h-1zM1266 47h2v1h-2zM1268 48h1v12h-1zM1268 59h3v1h-3zM1270 48h1v12h-1zM1271 47h2v1h-2zM1273 48h1v12h-1zM1273 59h4v1h-4zM1276 48h1v12h-1zM1277 47h2v1h-2zM1279 48h1v12h-1zM1279 59h4v1h-4zM1282 48h1v12h-1zM1283 47h2v1h-2zM1285 48h1v12h-1zM1285 59h4v1h-4zM1288 48h1v12h-1zM1289 47h2v1h-2zM1291 48h1v12h-1zM1291 59h4v1h-4zM1294 48h1v12h-1zM1295 47h2v1h-2zM1297 48h1v12h-1zM1297 59h4v1h-4zM1300 48h1v12h-1zM1301 47h1v1h-1zM1302 48h1v12h-1zM1302 59h4v1h-4zM1305 48h1v12h-1zM1306 47h2v1h-2zM1308 48h1v12h-1zM1308 59h4v1h-4zM1311 48h1v12h-1zM1312 47h2v1h-2zM1314 48h1v12h-1zM1314 59h4v1h-4zM1317 48h1v12h-1zM1318 47h2v1h-2zM1320 48h1v12h-1zM1320 59h4v1h-4zM1323 48h1v12h-1zM1324 47h2v1h-2zM1326 48h1v12h-1zM1326 59h1v1h-1zM272 64h1055v1h-1055zM272 81h1055v1h-1055zM272 161h51v1h-51zM322 150h1v12h-1zM323 149h5v1h-5zM328 150h1v12h-1zM328 161h112v1h-112zM439 150h1v12h-1zM440 149h4v1h-4zM444 150h1v12h-1zM444 161h112v1h-112zM555 150h1v12h-1zM556 149h5v1h-5zM561 150h1v12h-1zM561 161h111v1h-111zM671 150h1v12h-1zM672 149h5v1h-5zM677 150h1v12h-1zM677 161h112v1h-112zM788 150h1v12h-1zM789 149h4v1h-4zM793 150h1v12h-1zM793 161h112v1h-112zM904 150h1v12h-1zM905 149h5v1h-5zM910 150h1v12h-1zM910 161h111v1h-111zM1020 150h1v12h-1zM1021 149h5v1h-5zM1026 150h1v12h-1zM1026 161h112v1h-112zM1137 150h1v12h-1zM1138 149h4v1h-4zM1142 150h1v12h-1zM1142 161h112v1h-112zM1253 150h1v12h-1zM1254 149h5v1h-5zM1259 150h1v12h-1zM1259 161h68v1h-68zM272 280h51v1h-51zM322 269h1v12h-1zM323 268h5v1h-5zM328 269h1v12h-1zM328 280h112v1h-112zM439 269h1v12h-1zM440 268h4v1h-4zM444 269h1v12h-1zM444 280h112v1h-112zM555 269h1v12h-1zM556 268h5v1h-5zM561 269h1v12h-1zM561 280h111v1h-111zM671 269h1v12h-1zM672 268h5v1h-5zM677 269h1v12h-1zM677 280h112v1h-112zM788 269h1v12h-1zM789 268h4v1h-4zM793 269h1v12h-1zM793 280h112v1h-112zM904 269h1v12h-1zM905 268h5v1h-5zM910 269h1v12h-1zM910 280h111v1h-111zM1020 269h1v12h-1zM1021 268h5v1h-5zM1026 269h1v12h-1zM1026 280h112v1h-112zM1137 269h1v12h-1zM1138 268h4v1h-4zM1142 269h1v12h-1zM1142 280h112v1h-112zM1253 269h1v12h-1zM1254 268h5v1h-5zM1259 269h1v12h-1zM1259 280h68v1h-68z"/>
<path fill="#a5eda5" d="M271 98h54v1h-54zM271 110h54v1h-54zM325 101h1v7h-1zM324 99h1v2h-1zM324 108h1v2h-1zM326 99h1v2h-1zM326 108h1v2h-1zM326 98h116v1h-116zM326 110h116v1h-116zM442 101h1v7h-1zM441 99h1v2h-1zM441 108h1v2h-1zM443 99h1v2h-1zM443 108h1v2h-1zM443 98h115v1h-115zM443 110h115v1h-115zM558 101h1v7h-1zM557 99h1v2h-1zM557 108h1v2h-1zM559 99h1v2h-1zM559 108h1v2h-1zM559 98h115v1h-115zM559 110h115v1h-115zM674 101h1v7h-1zM673 99h1v2h-1zM673 108h1v2h-1zM675 99h1v2h-1zM675 108h1v2h-1zM675 98h116v1h-116zM675 110h116v1h-116zM791 101h1v7h-1zM790 99h1v2h-1zM790 108h1v2h-1zM792 99h1v2h-1zM792 108h1v2h-1zM792 98h115v1h-115zM792 110h115v1h-115zM907 101h1v7h-1zM906 99h1v2h-1zM906 108h1v2h-1zM908 99h1v2h-1zM908 108h1v2h-1zM908 98h115v1h-115zM908 110h115v1h-115zM1023 101h1v7h-1zM1022 99h1v2h-1zM1022 108h1v2h-1zM1024 99h1v2h-1zM1024 108h1v2h-1zM1024 98h116v1h-116zM1024 110h116v1h-116zM1140 101h1v7h-1zM1139 99h1v2h-1zM1139 108h1v2h-1zM1141 99h1v2h-1zM1141 108h1v2h-1zM1141 98h115v1h-115zM1141 110h115v1h-115zM1256 101h1v7h-1zM1255 99h1v2h-1zM1255 108h1v2h-1zM1257 99h1v2h-1zM1257 108h1v2h-1zM1257 98h70v1h-70zM1257 110h70v1h-70zM271 115h54v1h-54zM271 127h54v1h-54zM325 118h1v7h-1zM324 116h1v2h-1zM324 125h1v2h-1zM326 116h1v2h-1zM326 125h1v2h-1zM326 115h116v1h-116zM326 127h116v1h-116zM442 118h1v7h-1zM441 116h1v2h-1zM441 125h1v2h-1zM443 116h1v2h-1zM443 125h1v2h-1zM443 115h115v1h-115zM443 127h115v1h-115zM558 118h1v7h-1zM557 116h1v2h-1zM557 125h1v2h-1zM559 116h1v2h-1zM559 125h1v2h-1zM559 115h115v1h-115zM559 127h115v1h-115zM674 118h1v7h-1zM673 116h1v2h-1zM673 125h1v2h-1zM675 116h1v2h-1zM675 125h1v2h-1zM675 115h116v1h-116zM675 127h116v1h-116zM791 118h1v7h-1zM790 116h1v2h-1zM790 125h1v2h-1zM792 116h1v2h-1zM792 125h1v2h-1zM792 115h115v1h-115zM792 127h115v1h-115zM907 118h1v7h-1zM906 116h1v2h-1zM906 125h1v2h-1zM908 116h1v2h-1zM908 125h1v2h-1zM908 115h115v1h-115zM908 127h115v1h-115zM1023 118h1v7h-1zM1022 116h1v2h-1zM1022 125h1v2h-1zM1024 116h1v2h-1zM1024 125h1v2h-1zM1024 115h116v1h-116zM1024 127h116v1h-116zM1140 118h1v7h-1zM1139 116h1v2h-1zM1139 125h1v2h-1zM1141 116h1v2h-1zM1141 125h1v2h-1zM1141 115h115v1h-115zM1141 127h115v1h-115zM1256 118h1v7h-1zM1255 116h1v2h-1zM1255 125h1v2h-1zM1257 116h1v2h-1zM1257 125h1v2h-1zM1257 115h70v1h-70zM1257 127h70v1h-70zM271 132h168v1h-168zM271 144h168v1h-168zM439 135h1v7h-1zM438 133h1v2h-1zM438 142h1v2h-1zM440 133h1v2h-1zM440 142h1v2h-1zM440 132h115v1h-115zM440 144h115v1h-115zM555 135h1v7h-1zM554 133h1v2h-1zM554 142h1v2h-1zM556 133h1v2h-1zM556 142h1v2h-1zM556 132h115v1h-115zM556 144h115v1h-115zM671 135h1v7h-1zM670 133h1v2h-1zM670 142h1v2h-1zM672 133h1v2h-1zM672 142h1v2h-1zM672 132h116v1h-116zM672 144h116v1h-116zM788 135h1v7h-1zM787 133h1v2h-1zM787 142h1v2h-1zM789 133h1v2h-1zM789 142h1v2h-1zM789 132h115v1h-115zM789 144h115v1h-115zM904 135h1v7h-1zM903 133h1v2h-1zM903 142h1v2h-1zM905 133h1v2h-1zM905 142h1v2h-1zM905 132h115v1h-115zM905 144h115v1h-115zM1020 135h1v7h-1zM1019 133h1v2h-1zM1019 142h1v2h-1zM1021 133h1v2h-1zM1021 142h1v2h-1zM1021 132h116v1h-116zM1021 144h116v1h-116zM1137 135h1v7h-1zM1136 133h1v2h-1zM1136 142h1v2h-1zM1138 133h1v2h-1zM1138 142h1v2h-1zM1138 132h115v1h-115zM1138 144h115v1h-115zM1253 135h1v7h-1zM1252 133h1v2h-1zM1252 142h1v2h-1zM1254 133h1v2h-1zM1254 142h1v2h-1zM1254 132h73v1h-73zM1254 144h73v1h-73zM271 166h5v1h-5zM271 178h5v1h-5zM276 169h1v7h-1zM275 167h1v2h-1zM275 176h1v2h-1zM277 167h1v2h-1zM277 176h1v2h-1zM277 166h5v1h-5zM277 178h5v1h-5zM282 169h1v7h-1zM281 167h1v2h-1zM281 176h1v2h-1zM283 167h1v2h-1zM283 176h1v2h-1zM283 166h4v1h-4zM283 178h4v1h-4zM287 169h1v7h-1zM286 167h1v2h-1zM286 176h1v2h-1zM288 167h1v2h-1zM288 176h1v2h-1zM288 166h5v1h-5zM288 178h5v1h-5zM293 169h1v7h-1zM292 167h1v2h-1zM292 176h1v2h-1zM294 167h1v2h-1zM294 176h1v2h-1zM294 166h5v1h-5zM294 178h5v1h-5zM299 169h1v7h-1zM298 167h1v2h-1zM298 176h1v2h-1zM300 167h1v2h-1zM300 176h1v2h-1zM300 166h5v1h-5zM300 178h5v1h-5zM305 169h1v7h-1zM304 167h1v2h-1zM304 176h1v2h-1zM306 167h1v2h-1zM306 176h1v2h-1zM306 166h5v1h-5zM306 178h5v1h-5zM311 169h1v7h-1zM310 167h1v2h-1zM310 176h1v2h-1zM312 167h1v2h-1zM312 176h1v2h-1zM312 166h5v1h-5zM312 178h5v1h-5zM317 169h1v7h-1zM316 167h1v2h-1zM316 176h1v2h-1zM318 167h1v2h-1zM318 176h1v2h-1zM318 166h4v1h-4zM318 178h4v1h-4zM322 169h1v7h-1zM321 167h1v2h-1zM321 176h1v2h-1zM323 167h1v2h-1zM323 176h1v2h-1zM323 166h5v1h-5zM323 178h5v1h-5zM328 169h1v7h-1zM327 167h1v2h-1zM327 176h1v2h-1zM329 167h1v2h-1zM329 176h1v2h-1zM329 166h5v1h-5zM329 178h5v1h-5zM334 169h1v7h-1zM333 167h1v2h-1zM333 176h1v2h-1zM335 167h1v2h-1zM335 176h1v2h-1zM335 166h5v1h-5zM335 178h5v1h-5zM340 169h1v7h-1zM339 167h1v2h-1zM339 176h1v2h-1zM341 167h1v2h-1zM341 176h1v2h-1zM341 166h5v1h-5zM341 178h5v1h-5zM346 169h1v7h-1zM345 167h1v2h-1zM345 176h1v2h-1zM347 167h1v2h-1zM347 176h1v2h-1zM347 166h4v1h-4zM347 178h4v1h-4zM351 169h1v7h-1zM350 167h1v2h-1zM350 176h1v2h-1zM352 167h1v2h-1zM352 176h1v2h-1zM352 166h5v1h-5zM352 178h5v1h-5zM357 169h1v7h-1zM356 167h1v2h-1zM356 176h1v2h-1zM358 167h1v2h-1zM358 176h1v2h-1zM358 166h5v1h-5zM358 178h5v1h-5zM363 169h1v7h-1zM362 167h1v2h-1zM362 176h1v2h-1zM364 167h1v2h-1zM364 176h1v2h-1zM364 166h5v1h-5zM364 178h5v1h-5zM369 169h1v7h-1zM368 167h1v2h-1zM368 176h1v2h-1zM370 167h1v2h-1zM370 176h1v2h-1zM370 166h5v1h-5zM370 178h5v1h-5zM375 169h1v7h-1zM374 167h1v2h-1zM374 176h1v2h-1zM376 167h1v2h-1zM376 176h1v2h-1zM376 166h5v1h-5zM376 178h5v1h-5zM381 169h1v7h-1zM380 167h1v2h-1zM380 176h1v2h-1zM382 167h1v2h-1zM382 176h1v2h-1zM382 166h4v1h-4zM382 178h4v1h-4zM386 169h1v7h-1zM385 167h1v2h-1zM385 176h1v2h-1zM387 167h1v2h-1zM387 176h1v2h-1zM387 166h5v1h-5zM387 178h5v1h-5zM392 169h1v7h-1zM391 167h1v2h-1zM391 176h1v2h-1zM393 167h1v2h-1zM393 176h1v2h-1zM393 166h5v1h-5zM393 178h5v1h-5zM398 169h1v7h-1zM397 167h1v2h-1zM397 176h1v2h-1zM399 167h1v2h-1zM399 176h1v2h-1zM399 166h5v1h-5zM399 178h5v1h-5zM404 169h1v7h-1zM403 167h1v2h-1zM403 176h1v2h-1zM405 167h1v2h-1zM405 176h1v2h-1zM405 166h5v1h-5zM405 178h5v1h-5zM410 169h1v7h-1zM409 167h1v2h-1zM409 176h1v2h-1zM411 167h1v2h-1zM411 176h1v2h-1zM411 166h4v1h-4zM411 178h4v1h-4zM415 169h1v7h-1zM414 167h1v2h-1zM414 176h1v2h-1zM416 167h1v2h-1zM416 176h1v2h-1zM416 166h5v1h-5zM416 178h5v1h-5zM421 169h1v7h-1zM420 167h1v2h-1zM420 176h1v2h-1zM422 167h1v2h-1zM422 176h1v2h-1zM422 166h5v1h-5zM422 178h5v1h-5zM427 169h1v7h-1zM426 167h1v2h-1zM426 176h1v2h-1zM428 167h1v2h-1zM428 176h1v2h-1zM428 166h5v1h-5zM428 178h5v1h-5zM433 169h1v7h-1zM432 167h1v2h-1zM432 176h1v2h-1zM434 167h1v2h-1zM434 176h1v2h-1zM434 166h5v1h-5zM434 178h5v1h-5zM439 169h1v7h-1zM438 167h1v2h-1zM438 176h1v2h-1zM440 167h1v2h-1zM440 176h1v2h-1zM440 166h4v1h-4zM440 178h4v1h-4zM444 169h1v7h-1zM443 167h1v2h-1zM443 176h1v2h-1zM445 167h1v2h-1zM445 176h1v2h-1zM445 166h5v1h-5zM445 178h5v1h-5zM450 169h1v7h-1zM449 167h1v2h-1zM449 176h1v2h-1zM451 167h1v2h-1zM451 176h1v2h-1zM451 166h5v1h-5zM451 178h5v1h-5zM456 169h1v7h-1zM455 167h1v2h-1zM455 176h1v2h-1zM457 167h1v2h-1zM457 176h1v2h-1zM457 166h5v1h-5zM457 178h5v1h-5zM462 169h1v7h-1zM461 167h1v2h-1zM461 176h1v2h-1zM463 167h1v2h-1zM463 176h1v2h-1zM463 166h5v1h-5zM463 178h5v1h-5zM468 169h1v7h-1zM467 167h1v2h-1zM467 176h1v2h-1zM469 167h1v2h-1zM469 176h1v2h-1zM469 166h5v1h-5zM469 178h5v1h-5zM474 169h1v7h-1zM473 167h1v2h-1zM473 176h1v2h-1zM475 167h1v2h-1zM475 176h1v2h-1zM475 166h4v1h-4zM475 178h4v1h-4zM479 169h1v7h-1zM478 167h1v2h-1zM478 176h1v2h-1zM480 167h1v2h-1zM480 176h1v2h-1zM480 166h5v1h-5zM480 178h5v1h-5zM485 169h1v7h-1zM484 167h1v2h-1zM484 176h1v2h-1zM486 167h1v2h-1zM486 176h1v2h-1zM486 166h5v1h-5zM486 178h5v1h-5zM491 169h1v7h-1zM490 167h1v2h-1zM490 176h1v2h-1zM492 167h1v2h-1zM492 176h1v2h-1zM492 166h5v1h-5zM492 178h5v1h-5zM497 169h1v7h-1zM496 167h1v2h-1zM496 176h1v2h-1zM498 167h1v2h-1zM498 176h1v2h-1zM498 166h5v1h-5zM498 178h5v1h-5zM503 169h1v7h-1zM502 167h1v2h-1zM502 176h1v2h-1zM504 167h1v2h-1zM504 176h1v2h-1zM504 166h4v1h-4zM504 178h4v1h-4zM508 169h1v7h-1zM507 167h1v2h-1zM507 176h1v2h-1zM509 167h1v2h-1zM509 176h1v2h-1zM509 166h5v1h-5zM509 178h5v1h-5zM514 169h1v7h-1zM513 167h1v2h-1zM513 176h1v2h-1zM515 167h1v2h-1zM515 176h1v2h-1zM515 166h5v1h-5zM515 178h5v1h-5zM520 169h1v7h-1zM519 167h1v2h-1zM519 176h1v2h-1zM521 167h1v2h-1zM521 176h1v2h-1zM521 166h5v1h-5zM521 178h5v1h-5zM526 169h1v7h-1zM525 167h1v2h-1zM525 176h1v2h-1zM527 167h1v2h-1zM527 176h1v2h-1zM527 166h5v1h-5zM527 178h5v1h-5zM532 169h1v7h-1zM531 167h1v2h-1zM531 176h1v2h-1zM533 167h1v2h-1zM533 176h1v2h-1zM533 166h5v1h-5zM533 178h5v1h-5zM538 169h1v7h-1zM537 167h1v2h-1zM537 176h1v2h-1zM539 167h1v2h-1zM539 176h1v2h-1zM539 166h4v1h-4zM539 178h4v1h-4zM543 169h1v7h-1zM542 167h1v2h-1zM542 176h1v2h-1zM544 167h1v2h-1zM544 176h1v2h-1zM544 166h5v1h-5zM544 178h5v1h-5zM549 169h1v7h-1zM548 167h1v2h-1zM548 176h1v2h-1zM550 167h1v2h-1zM550 176h1v2h-1zM550 166h5v1h-5zM550 178h5v1h-5zM555 169h1v7h-1zM554 167h1v2h-1zM554 176h1v2h-1zM556 167h1v2h-1zM556 176h1v2h-1zM556 166h5v1h-5zM556 178h5v1h-5zM561 169h1v7h-1zM560 167h1v2h-1zM560 176h1v2h-1zM562 167h1v2h-1zM562 176h1v2h-1zM562 166h5v1h-5zM562 178h5v1h-5zM567 169h1v7h-1zM566 167h1v2h-1zM566 176h1v2h-1zM568 167h1v2h-1zM568 176h1v2h-1zM568 166h4v1h-4zM568 178h4v1h-4zM572 169h1v7h-1zM571 167h1v2h-1zM571 176h1v2h-1zM573 167h1v2h-1zM573 176h1v2h-1zM573 166h5v1h-5zM573 178h5v1h-5zM578 169h1v7h-1zM577 167h1v2h-1zM577 176h1v2h-1zM579 167h1v2h-1zM579 176h1v2h-1zM579 166h5v1h-5zM579 178h5v1h-5zM584 169h1v7h-1zM583 167h1v2h-1zM583 176h1v2h-1zM585 167h1v2h-1zM585 176h1v2h-1zM585 166h5v1h-5zM585 178h5v1h-5zM590 169h1v7h-1zM589 167h1v2h-1zM589 176h1v2h-1zM591 167h1v2h-1zM591 176h1v2h-1zM591 166h5v1h-5zM591 178h5v1h-5zM596 169h1v7h-1zM595 167h1v2h-1zM595 176h1v2h-1zM597 167h1v2h-1zM597 176h1v2h-1zM597 166h5v1h-5zM597 178h5v1h-5zM602 169h1v7h-1zM601 167h1v2h-1zM601 176h1v2h-1zM603 167h1v2h-1zM603 176h1v2h-1zM603 166h4v1h-4zM603 178h4v1h-4zM607 169h1v7h-1zM606 167h1v2h-1zM606 176h1v2h-1zM608 167h1v2h-1zM608 176h1v2h-1zM608 166h5v1h-5zM608 178h5v1h-5zM613 169h1v7h-1zM612 167h1v2h-1zM612 176h1v2h-1zM614 167h1v2h-1zM614 176h1v2h-1zM614 166h5v1h-5zM614 178h5v1h-5zM619 169h1v7h-1zM618 167h1v2h-1zM618 176h1v2h-1zM620 167h1v2h-1zM620 176h1v2h-1zM620 166h5v1h-5zM620 178h5v1h-5zM625 169h1v7h-1zM624 167h1v2h-1zM624 176h1v2h-1zM626 167h1v2h-1zM626 176h1v2h-1zM626 166h5v1h-5zM626 178h5v1h-5zM631 169h1v7h-1zM630 167h1v2h-1zM630 176h1v2h-1zM632 167h1v2h-1zM632 176h1v2h-1zM632 166h4v1h-4zM632 178h4v1h-4zM636 169h1v7h-1zM635 167h1v2h-1zM635 176h1v2h-1zM637 167h1v2h-1zM637 176h1v2h-1zM637 166h5v1h-5zM637 178h5v1h-5zM642 169h1v7h-1zM641 167h1v2h-1zM641 176h1v2h-1zM643 167h1v2h-1zM643 176h1v2h-1zM643 166h5v1h-5zM643 178h5v1h-5zM648 169h1v7h-1zM647 167h1v2h-1zM647 176h1v2h-1zM649 167h1v2h-1zM649 176h1v2h-1zM649 166h5v1h-5zM649 178h5v1h-5zM654 169h1v7h-1zM653 167h1v2h-1zM653 176h1v2h-1zM655 167h1v2h-1zM655 176h1v2h-1zM655 166h5v1h-5zM655 178h5v1h-5zM660 169h1v7h-1zM659 167h1v2h-1zM659 176h1v2h-1zM661 167h1v2h-1zM661 176h1v2h-1zM661 166h5v1h-5zM661 178h5v1h-5zM666 169h1v7h-1zM665 167h1v2h-1zM665 176h1v2h-1zM667 167h1v2h-1zM667 176h1v2h-1zM667 166h4v1h-4zM667 178h4v1h-4zM671 169h1v7h-1zM670 167h1v2h-1zM670 176h1v2h-1zM672 167h1v2h-1zM672 176h1v2h-1zM672 166h5v1h-5zM672 178h5v1h-5zM677 169h1v7h-1zM676 167h1v2h-1zM676 176h1v2h-1zM678 167h1v2h-1zM678 176h1v2h-1zM678 166h5v1h-5zM678 178h5v1h-5zM683 169h1v7h-1zM682 167h1v2h-1zM682 176h1v2h-1zM684 167h1v2h-1zM684 176h1v2h-1zM684 166h5v1h-5zM684 178h5v1h-5zM689 169h1v7h-1zM688 167h1v2h-1zM688 176h1v2h-1zM690 167h1v2h-1zM690 176h1v2h-1zM690 166h5v1h-5zM690 178h5v1h-5zM695 169h1v7h-1zM694 167h1v2h-1zM694 176h1v2h-1zM696 167h1v2h-1zM696 176h1v2h-1zM696 166h4v1h-4zM696 178h4v1h-4zM700 169h1v7h-1zM699 167h1v2h-1zM699 176h1v2h-1zM701 167h1v2h-1zM701 176h1v2h-1zM701 166h5v1h-5zM701 178h5v1h-5zM706 169h1v7h-1zM705 167h1v2h-1zM705 176h1v2h-1zM707 167h1v2h-1zM707 176h1v2h-1zM707 166h5v1h-5zM707 178h5v1h-5zM712 169h1v7h-1zM711 167h1v2h-1zM711 176h1v2h-1zM713 167h1v2h-1zM713 176h1v2h-1zM713 166h5v1h-5zM713 178h5v1h-5zM718 169h1v7h-1zM717 167h1v2h-1zM717 176h1v2h-1zM719 167h1v2h-1zM719 176h1v2h-1zM719 166h5v1h-5zM719 178h5v1h-5zM724 169h1v7h-1zM723 167h1v2h-1zM723 176h1v2h-1zM725 167h1v2h-1zM725 176h1v2h-1zM725 166h4v1h-4zM725 178h4v1h-4zM729 169h1v7h-1zM728 167h1v2h-1zM728 176h1v2h-1zM730 167h1v2h-1zM730 176h1v2h-1zM730 166h5v1h-5zM730 178h5v1h-5zM735 169h1v7h-1zM734 167h1v2h-1zM734 176h1v2h-1zM736 167h1v2h-1zM736 176h1v2h-1zM736 166h5v1h-5zM736 178h5v1h-5zM741 169h1v7h-1zM740 167h1v2h-1zM740 176h1v2h-1zM742 167h1v2h-1zM742 176h1v2h-1zM742 166h5v1h-5zM742 178h5v1h-5zM747 169h1v7h-1zM746 167h1v2h-1zM746 176h1v2h-1zM748 167h1v2h-1zM748 176h1v2h-1zM748 166h5v1h-5zM748 178h5v1h-5zM753 169h1v7h-1zM752 167h1v2h-1zM752 176h1v2h-1zM754 167h1v2h-1zM754 176h1v2h-1zM754 166h5v1h-5zM754 178h5v1h-5zM759 169h1v7h-1zM758 167h1v2h-1zM758 176h1v2h-1zM760 167h1v2h-1zM760 176h1v2h-1zM760 166h4v1h-4zM760 178h4v1h-4zM764 169h1v7h-1zM763 167h1v2h-1zM763 176h1v2h-1zM765 167h1v2h-1zM765 176h1v2h-1zM765 166h5v1h-5zM765 178h5v1h-5zM770 169h1v7h-1zM769 167h1v2h-1zM769 176h1v2h-1zM771 167h1v2h-1zM771 176h1v2h-1zM771 166h5v1h-5zM771 178h5v1h-5zM776 169h1v7h-1zM775 167h1v2h-1zM775 176h1v2h-1zM777 167h1v2h-1zM777 176h1v2h-1zM777 166h5v1h-5zM777 178h5v1h-5zM782 169h1v7h-1zM781 167h1v2h-1zM781 176h1v2h-1zM783 167h1v2h-1zM783 176h1v2h-1zM783 166h5v1h-5zM783 178h5v1h-5zM788 169h1v7h-1zM787 167h1v2h-1zM787 176h1v2h-1zM789 167h1v2h-1zM789 176h1v2h-1zM789 166h4v1h-4zM789 178h4v1h-4zM793 169h1v7h-1zM792 167h1v2h-1zM792 176h1v2h-1zM794 167h1v2h-1zM794 176h1v2h-1zM794 166h5v1h-5zM794 178h5v1h-5zM799 169h1v7h-1zM798 167h1v2h-1zM798 176h1v2h-1zM800 167h1v2h-1zM800 176h1v2h-1zM800 166h5v1h-5zM800 178h5v1h-5zM805 169h1v7h-1zM804 167h1v2h-1zM804 176h1v2h-1zM806 167h1v2h-1zM806 176h1v2h-1zM806 166h5v1h-5zM806 178h5v1h-5zM811 169h1v7h-1zM810 167h1v2h-1zM810 176h1v2h-1zM812 167h1v2h-1zM812 176h1v2h-1zM812 166h5v1h-5zM812 178h5v1h-5zM817 169h1v7h-1zM816 167h1v2h-1zM816 176h1v2h-1zM818 167h1v2h-1zM818 176h1v2h-1zM818 166h5v1h-5zM818 178h5v1h-5zM823 169h1v7h-1zM822 167h1v2h-1zM822 176h1v2h-1zM824 167h1v2h-1zM824 176h1v2h-1zM824 166h4v1h-4zM824 178h4v1h-4zM828 169h1v7h-1zM827 167h1v2h-1zM827 176h1v2h-1zM829 167h1v2h-1zM829 176h1v2h-1zM829 166h5v1h-5zM829 178h5v1h-5zM834 169h1v7h-1zM833 167h1v2h-1zM833 176h1v2h-1zM835 167h1v2h-1zM835 176h1v2h-1zM835 166h5v1h-5zM835 178h5v1h-5zM840 169h1v7h-1zM839 167h1v2h-1zM839 176h1v2h-1zM841 167h1v2h-1zM841 176h1v2h-1zM841 166h5v1h-5zM841 178h5v1h-5zM846 169h1v7h-1zM845 167h1v2h-1zM845 176h1v2h-1zM847 167h1v2h-1zM847 176h1v2h-1zM847 166h5v1h-5zM847 178h5v1h-5zM852 169h1v7h-1zM851 167h1v2h-1zM851 176h1v2h-1zM853 167h1v2h-1zM853 176h1v2h-1zM853 166h4v1h-4zM853 178h4v1h-4zM857 169h1v7h-1zM856 167h1v2h-1zM856 176h1v2h-1zM858 167h1v2h-1zM858 176h1v2h-1zM858 166h5v1h-5zM858 178h5v1h-5zM863 169h1v7h-1zM862 167h1v2h-1zM862 176h1v2h-1zM864 167h1v2h-1zM864 176h1v2h-1zM864 166h5v1h-5zM864 178h5v1h-5zM869 169h1v7h-1zM868 167h1v2h-1zM868 176h1v2h-1zM870 167h1v2h-1zM870 176h1v2h-1zM870 166h5v1h-5zM870 178h5v1h-5zM875 169h1v7h-1zM874 167h1v2h-1zM874 176h1v2h-1zM876 167h1v2h-1zM876 176h1v2h-1zM876 166h5v1h-5zM876 178h5v1h-5zM881 169h1v7h-1zM880 167h1v2h-1zM880 176h1v2h-1zM882 167h1v2h-1zM882 176h1v2h-1zM882 166h5v1h-5zM882 178h5v1h-5zM887 169h1v7h-1zM886 167h1v2h-1zM886 176h1v2h-1zM888 167h1v2h-1zM888 176h1v2h-1zM888 166h4v1h-4zM888 178h4v1h-4zM892 169h1v7h-1zM891 167h1v2h-1zM891 176h1v2h-1zM893 167h1v2h-1zM893 176h1v2h-1zM893 166h5v1h-5zM893 178h5v1h-5zM898 169h1v7h-1zM897 167h1v2h-1zM897 176h1v2h-1zM899 167h1v2h-1zM899 176h1v2h-1zM899 166h5v1h-5zM899 178h5v1h-5zM904 169h1v7h-1zM903 167h1v2h-1zM903 176h1v2h-1zM905 167h1v2h-1zM905 176h1v2h-1zM905 166h5v1h-5zM905 178h5v1h-5zM910 169h1v7h-1zM909 167h1v2h-1zM909 176h1v2h-1zM911 167h1v2h-1zM911 176h1v2h-1zM911 166h5v1h-5zM911 178h5v1h-5zM916 169h1v7h-1zM915 167h1v2h-1zM915 176h1v2h-1zM917 167h1v2h-1zM917 176h1v2h-1zM917 166h4v1h-4zM917 178h4v1h-4zM921 169h1v7h-1zM920 167h1v2h-1zM920 176h1v2h-1zM922 167h1v2h-1zM922 176h1v2h-1zM922 166h5v1h-5zM922 178h5v1h-5zM927 169h1v7h-1zM926 167h1v2h-1zM926 176h1v2h-1zM928 167h1v2h-1zM928 176h1v2h-1zM928 166h5v1h-5zM928 178h5v1h-5zM933 169h1v7h-1zM932 167h1v2h-1zM932 176h1v2h-1zM934 167h1v2h-1zM934 176h1v2h-1zM934 166h5v1h-5zM934 178h5v1h-5zM939 169h1v7h-1zM938 167h1v2h-1zM938 176h1v2h-1zM940 167h1v2h-1zM940 176h1v2h-1zM940 166h5v1h-5zM940 178h5v1h-5zM945 169h1v7h-1zM944 167h1v2h-1zM944 176h1v2h-1zM946 167h1v2h-1zM946 176h1v2h-1zM946 166h5v1h-5zM946 178h5v1h-5zM951 169h1v7h-1zM950 167h1v2h-1zM950 176h1v2h-1zM952 167h1v2h-1zM952 176h1v2h-1zM952 166h4v1h-4zM952 178h4v1h-4zM956 169h1v7h-1zM955 167h1v2h-1zM955 176h1v2h-1zM957 167h1v2h-1zM957 176h1v2h-1zM957 166h5v1h-5zM957 178h5v1h-5zM962 169h1v7h-1zM961 167h1v2h-1zM961 176h1v2h-1zM963 167h1v2h-1zM963 176h1v2h-1zM963 166h5v1h-5zM963 178h5v1h-5zM968 169h1v7h-1zM967 167h1v2h-1zM967 176h1v2h-1zM969 167h1v2h-1zM969 176h1v2h-1zM969 166h5v1h-5zM969 178h5v1h-5zM974 169h1v7h-1zM973 167h1v2h-1zM973 176h1v2h-1zM975 167h1v2h-1zM975 176h1v2h-1zM975 166h5v1h-5zM975 178h5v1h-5zM980 169h1v7h-1zM979 167h1v2h-1zM979 176h1v2h-1zM981 167h1v2h-1zM981 176h1v2h-1zM981 166h4v1h-4zM981 178h4v1h-4zM985 169h1v7h-1zM984 167h1v2h-1zM984 176h1v2h-1zM986 167h1v2h-1zM986 176h1v2h-1zM986 166h5v1h-5zM986 178h5v1h-5zM991 169h1v7h-1zM990 167h1v2h-1zM990 176h1v2h-1zM992 167h1v2h-1zM992 176h1v2h-1zM992 166h5v1h-5zM992 178h5v1h-5zM997 169h1v7h-1zM996 167h1v2h-1zM996 176h1v2h-1zM998 167h1v2h-1zM998 176h1v2h-1zM998 166h5v1h-5zM998 178h5v1h-5zM1003 169h1v7h-1zM1002 167h1v2h-1zM1002 176h1v2h-1zM1004 167h1v2h-1zM1004 176h1v2h-1zM1004 166h5v1h-5zM1004 178h5v1h-5zM1009 169h1v7h-1zM1008 167h1v2h-1zM1008 176h1v2h-1zM1010 167h1v2h-1zM1010 176h1v2h-1zM1010 166h5v1h-5zM1010 178h5v1h-5zM1015 169h1v7h-1zM1014 167h1v2h-1zM1014 176h1v2h-1zM1016 167h1v2h-1zM1016 176h1v2h-1zM1016 166h4v1h-4zM1016 178h4v1h-4zM1020 169h1v7h-1zM1019 167h1v2h-1zM1019 176h1v2h-1zM1021 167h1v2h-1zM1021 176h1v2h-1zM1021 166h5v1h-5zM1021 178h5v1h-5zM1026 169h1v7h-1zM1025 167h1v2h-1zM1025 176h1v2h-1zM1027 167h1v2h-1zM1027 176h1v2h-1zM1027 166h5v1h-5zM1027 178h5v1h-5zM1032 169h1v7h-1zM1031 167h1v2h-1zM1031 176h1v2h-1zM1033 167h1v2h-1zM1033 176h1v2h-1zM1033 166h5v1h-5zM1033 178h5v1h-5zM1038 169h1v7h-1zM1037 167h1v2h-1zM1037 176h1v2h-1zM1039 167h1v2h-1zM1039 176h1v2h-1zM1039 166h5v1h-5zM1039 178h5v1h-5zM1044 169h1v7h-1zM1043 167h1v2h-1zM1043 176h1v2h-1zM1045 167h1v2h-1zM1045 176h1v2h-1zM1045 166h4v1h-4zM1045 178h4v1h-4zM1049 169h1v7h-1zM1048 167h1v2h-1zM1048 176h1v2h-1zM1050 167h1v2h-1zM1050 176h1v2h-1zM1050 166h5v1h-5zM1050 178h5v1h-5zM1055 169h1v7h-1zM1054 167h1v2h-1zM1054 176h1v2h-1zM1056 167h1v2h-1zM1056 176h1v2h-1zM1056 166h5v1h-5zM1056 178h5v1h-5zM1061 169h1v7h-1zM1060 167h1v2h-1zM1060 176h1v2h-1zM1062 167h1v2h-1zM1062 176h1v2h-1zM1062 166h5v1h-5zM1062 178h5v1h-5zM1067 169h1v7h-1zM1066 167h1v2h-1zM1066 176h1v2h-1zM1068 167h1v2h-1zM1068 176h1v2h-1zM1068 166h5v1h-5zM1068 178h5v1h-5zM1073 169h1v7h-1zM1072 167h1v2h-1zM1072 176h1v2h-1zM1074 167h1v2h-1zM1074 176h1v2h-1zM1074 166h4v1h-4zM1074 178h4v1h-4zM1078 169h1v7h-1zM1077 167h1v2h-1zM1077 176h1v2h-1zM1079 167h1v2h-1zM1079 176h1v2h-1zM1079 166h5v1h-5zM1079 178h5v1h-5zM1084 169h1v7h-1zM1083 167h1v2h-1zM1083 176h1v2h-1zM1085 167h1v2h-1zM1085 176h1v2h-1zM1085 166h5v1h-5zM1085 178h5v1h-5zM1090 169h1v7h-1zM1089 167h1v2h-1zM1089 176h1v2h-1zM1091 167h1v2h-1zM1091 176h1v2h-1zM1091 166h5v1h-5zM1091 178h5v1h-5zM1096 169h1v7h-1zM1095 167h1v2h-1zM1095 176h1v2h-1zM1097 167h1v2h-1zM1097 176h1v2h-1zM1097 166h5v1h-5zM1097 178h5v1h-5zM1102 169h1v7h-1zM1101 167h1v2h-1zM1101 176h1v2h-1zM1103 167h1v2h-1zM1103 176h1v2h-1zM1103 166h5v1h-5zM1103 178h5v1h-5zM1108 169h1v7h-1zM1107 167h1v2h-1zM1107 176h1v2h-1zM1109 167h1v2h-1zM1109 176h1v2h-1zM1109 166h4v1h-4zM1109 178h4v1h-4zM1113 169h1v7h-1zM1112 167h1v2h-1zM1112 176h1v2h-1zM1114 167h1v2h-1zM1114 176h1v2h-1zM1114 166h5v1h-5zM1114 178h5v1h-5zM1119 169h1v7h-1zM1118 167h1v2h-1zM1118 176h1v2h-1zM1120 167h1v2h-1zM1120 176h1v2h-1zM1120 166h5v1h-5zM1120 178h5v1h-5zM1125 169h1v7h-1zM1124 167h1v2h-1zM1124 176h1v2h-1zM1126 167h1v2h-1zM1126 176h1v2h-1zM1126 166h5v1h-5zM1126 178h5v1h-5zM1131 169h1v7h-1zM1130 167h1v2h-1zM1130 176h1v2h-1zM1132 167h1v2h-1zM1132 176h1v2h-1zM1132 166h5v1h-5zM1132 178h5v1h-5zM1137 169h1v7h-1zM1136 167h1v2h-1zM1136 176h1v2h-1zM1138 167h1v2h-1zM1138 176h1v2h-1zM1138 166h4v1h-4zM1138 178h4v1h-4zM1142 169h1v7h-1zM1141 167h1v2h-1zM1141 176h1v2h-1zM1143 167h1v2h-1zM1143 176h1v2h-1zM1143 166h5v1h-5zM1143 178h5v1h-5zM1148 169h1v7h-1zM1147 167h1v2h-1zM1147 176h1v2h-1zM1149 167h1v2h-1zM1149 176h1v2h-1zM1149 166h5v1h-5zM1149 178h5v1h-5zM1154 169h1v7h-1zM1153 167h1v2h-1zM1153 176h1v2h-1zM1155 167h1v2h-1zM1155 176h1v2h-1zM1155 166h5v1h-5zM1155 178h5v1h-5zM1160 169h1v7h-1zM1159 167h1v2h-1zM1159 176h1v2h-1zM1161 167h1v2h-1zM1161 176h1v2h-1zM1161 166h5v1h-5zM1161 178h5v1h-5zM1166 169h1v7h-1zM1165 167h1v2h-1zM1165 176h1v2h-1zM1167 167h1v2h-1zM1167 176h1v2h-1zM1167 166h5v1h-5zM1167 178h5v1h-5zM1172 169h1v7h-1zM1171 167h1v2h-1zM1171 176h1v2h-1zM1173 167h1v2h-1zM1173 176h1v2h-1zM1173 166h4v1h-4zM1173 178h4v1h-4zM1177 169h1v7h-1zM1176 167h1v2h-1zM1176 176h1v2h-1zM1178 167h1v2h-1zM1178 176h1v2h-1zM1178 166h5v1h-5zM1178 178h5v1h-5zM1183 169h1v7h-1zM1182 167h1v2h-1zM1182 176h1v2h-1zM1184 167h1v2h-1zM1184 176h1v2h-1zM1184 166h5v1h-5zM1184 178h5v1h-5zM1189 169h1v7h-1zM1188 167h1v2h-1zM1188 176h1v2h-1zM1190 167h1v2h-1zM1190 176h1v2h-1zM1190 166h5v1h-5zM1190 178h5v1h-5zM1195 169h1v7h-1zM1194 167h1v2h-1zM1194 176h1v2h-1zM1196 167h1v2h-1zM1196 176h1v2h-1zM1196 166h5v1h-5zM1196 178h5v1h-5zM1201 169h1v7h-1zM1200 167h1v2h-1zM1200 176h1v2h-1zM1202 167h1v2h-1zM1202 176h1v2h-1zM1202 166h4v1h-4zM1202 178h4v1h-4zM1206 169h1v7h-1zM1205 167h1v2h-1zM1205 176h1v2h-1zM1207 167h1v2h-1zM1207 176h1v2h-1zM1207 166h5v1h-5zM1207 178h5v1h-5zM1212 169h1v7h-1zM1211 167h1v2h-1zM1211 176h1v2h-1zM1213 167h1v2h-1zM1213 176h1v2h-1zM1213 166h5v1h-5zM1213 178h5v1h-5zM1218 169h1v7h-1zM1217 167h1v2h-1zM1217 176h1v2h-1zM1219 167h1v2h-1zM1219 176h1v2h-1zM1219 166h5v1h-5zM1219 178h5v1h-5zM1224 169h1v7h-1zM1223 167h1v2h-1zM1223 176h1v2h-1zM1225 167h1v2h-1zM1225 176h1v2h-1zM1225 166h5v1h-5zM1225 178h5v1h-5zM1230 169h1v7h-1zM1229 167h1v2h-1zM1229 176h1v2h-1zM1231 167h1v2h-1zM1231 176h1v2h-1zM1231 166h5v1h-5zM1231 178h5v1h-5zM1236 169h1v7h-1zM1235 167h1v2h-1zM1235 176h1v2h-1zM1237 167h1v2h-1zM1237 176h1v2h-1zM1237 166h4v1h-4zM1237 178h4v1h-4zM1241 169h1v7h-1zM1240 167h1v2h-1zM1240 176h1v2h-1zM1242 167h1v2h-1zM1242 176h1v2h-1zM1242 166h5v1h-5zM1242 178h5v1h-5zM1247 169h1v7h-1zM1246 167h1v2h-1zM1246 176h1v2h-1zM1248 167h1v2h-1zM1248 176h1v2h-1zM1248 166h5v1h-5zM1248 178h5v1h-5zM1253 169h1v7h-1zM1252 167h1v2h-1zM1252 176h1v2h-1zM1254 167h1v2h-1zM1254 176h1v2h-1zM1254 166h5v1h-5zM1254 178h5v1h-5zM1259 169h1v7h-1zM1258 167h1v2h-1zM1258 176h1v2h-1zM1260 167h1v2h-1zM1260 176h1v2h-1zM1260 166h5v1h-5zM1260 178h5v1h-5zM1265 169h1v7h-1zM1264 167h1v2h-1zM1264 176h1v2h-1zM1266 167h1v2h-1zM1266 176h1v2h-1zM1266 166h4v1h-4zM1266 178h4v1h-4zM1270 169h1v7h-1zM1269 167h1v2h-1zM1269 176h1v2h-1zM1271 167h1v2h-1zM1271 176h1v2h-1zM1271 166h5v1h-5zM1271 178h5v1h-5zM1276 169h1v7h-1zM1275 167h1v2h-1zM1275 176h1v2h-1zM1277 167h1v2h-1zM1277 176h1v2h-1zM1277 166h5v1h-5zM1277 178h5v1h-5zM1282 169h1v7h-1zM1281 167h1v2h-1zM1281 176h1v2h-1zM1283 167h1v2h-1zM1283 176h1v2h-1zM1283 166h5v1h-5zM1283 178h5v1h-5zM1288 169h1v7h-1zM1287 167h1v2h-1zM1287 176h1v2h-1zM1289 167h1v2h-1zM1289 176h1v2h-1zM1289 166h5v1h-5zM1289 178h5v1h-5zM1294 169h1v7h-1zM1293 167h1v2h-1zM1293 176h1v2h-1zM1295 167h1v2h-1zM1295 176h1v2h-1zM1295 166h5v1h-5zM1295 178h5v1h-5zM1300 169h1v7h-1zM1299 167h1v2h-1zM1299 176h1v2h-1zM1301 167h1v2h-1zM1301 176h1v2h-1zM1301 166h4v1h-4zM1301 178h4v1h-4zM1305 169h1v7h-1zM1304 167h1v2h-1zM1304 176h1v2h-1zM1306 167h1v2h-1zM1306 176h1v2h-1zM1306 166h5v1h-5zM1306 178h5v1h-5zM1311 169h1v7h-1zM1310 167h1v2h-1zM1310 176h1v2h-1zM1312 167h1v2h-1zM1312 176h1v2h-1zM1312 166h5v1h-5zM1312 178h5v1h-5zM1317 169h1v7h-1zM1316 167h1v2h-1zM1316 176h1v2h-1zM1318 167h1v2h-1zM1318 176h1v2h-1zM1318 166h5v1h-5zM1318 178h5v1h-5zM1323 169h1v7h-1zM1322 167h1v2h-1zM1322 176h1v2h-1zM1324 167h1v2h-1zM1324 176h1v2h-1zM1324 166h3v1h-3zM1324 178h3v1h-3zM271 183h63v1h-63zM271 195h63v1h-63zM334 186h1v7h-1zM333 184h1v2h-1zM333 193h1v2h-1zM335 184h1v2h-1zM335 193h1v2h-1zM335 183h11v1h-11zM335 195h11v1h-11zM346 186h1v7h-1zM345 184h1v2h-1zM345 193h1v2h-1zM347 184h1v2h-1zM347 193h1v2h-1zM347 183h10v1h-10zM347 195h10v1h-10zM357 186h1v7h-1zM356 184h1v2h-1zM356 193h1v2h-1zM358 184h1v2h-1zM358 193h1v2h-1zM358 183h11v1h-11zM358 195h11v1h-11zM369 186h1v7h-1zM368 184h1v2h-1zM368 193h1v2h-1zM370 184h1v2h-1zM370 193h1v2h-1zM370 183h5v1h-5zM370 195h5v1h-5zM375 186h1v7h-1zM374 184h1v2h-1zM374 193h1v2h-1zM376 184h1v2h-1zM376 193h1v2h-1zM376 183h5v1h-5zM376 195h5v1h-5zM381 186h1v7h-1zM380 184h1v2h-1zM380 193h1v2h-1zM382 184h1v2h-1zM382 193h1v2h-1zM382 183h4v1h-4zM382 195h4v1h-4zM386 186h1v7h-1zM385 184h1v2h-1zM385 193h1v2h-1zM387 184h1v2h-1zM387 193h1v2h-1zM387 183h5v1h-5zM387 195h5v1h-5zM392 186h1v7h-1zM391 184h1v2h-1zM391 193h1v2h-1zM393 184h1v2h-1zM393 193h1v2h-1zM393 183h5v1h-5zM393 195h5v1h-5zM398 186h1v7h-1zM397 184h1v2h-1zM397 193h1v2h-1zM399 184h1v2h-1zM399 193h1v2h-1zM399 183h5v1h-5zM399 195h5v1h-5zM404 186h1v7h-1zM403 184h1v2h-1zM403 193h1v2h-1zM405 184h1v2h-1zM405 193h1v2h-1zM405 183h5v1h-5zM405 195h5v1h-5zM410 186h1v7h-1zM409 184h1v2h-1zM409 193h1v2h-1zM411 184h1v2h-1zM411 193h1v2h-1zM411 183h4v1h-4zM411 195h4v1h-4zM415 186h1v7h-1zM414 184h1v2h-1zM414 193h1v2h-1zM416 184h1v2h-1zM416 193h1v2h-1zM416 183h11v1h-11zM416 195h11v1h-11zM427 186h1v7h-1zM426 184h1v2h-1zM426 193h1v2h-1zM428 184h1v2h-1zM428 193h1v2h-1zM428 183h22v1h-22zM428 195h22v1h-22zM450 186h1v7h-1zM449 184h1v2h-1zM449 193h1v2h-1zM451 184h1v2h-1zM451 193h1v2h-1zM451 183h11v1h-11zM451 195h11v1h-11zM462 186h1v7h-1zM461 184h1v2h-1zM461 193h1v2h-1zM463 184h1v2h-1zM463 193h1v2h-1zM463 183h11v1h-11zM463 195h11v1h-11zM474 186h1v7h-1zM473 184h1v2h-1zM473 193h1v2h-1zM475 184h1v2h-1zM475 193h1v2h-1zM475 183h4v1h-4zM475 195h4v1h-4zM479 186h1v7h-1zM478 184h1v2h-1zM478 193h1v2h-1zM480 184h1v2h-1zM480 193h1v2h-1zM480 183h5v1h-5zM480 195h5v1h-5zM485 186h1v7h-1zM484 184h1v2h-1zM484 193h1v2h-1zM486 184h1v2h-1zM486 193h1v2h-1zM486 183h5v1h-5zM486 195h5v1h-5zM491 186h1v7h-1zM490 184h1v2h-1zM490 193h1v2h-1zM492 184h1v2h-1zM492 193h1v2h-1zM492 183h5v1h-5zM492 195h5v1h-5zM497 186h1v7h-1zM496 184h1v2h-1zM496 193h1v2h-1zM498 184h1v2h-1zM498 193h1v2h-1zM498 183h10v1h-10zM498 195h10v1h-10zM508 186h1v7h-1zM507 184h1v2h-1zM507 193h1v2h-1zM509 184h1v2h-1zM509 193h1v2h-1zM509 183h11v1h-11zM509 195h11v1h-11zM520 186h1v7h-1zM519 184h1v2h-1zM519 193h1v2h-1zM521 184h1v2h-1zM521 193h1v2h-1zM521 183h5v1h-5zM521 195h5v1h-5zM526 186h1v7h-1zM525 184h1v2h-1zM525 193h1v2h-1zM527 184h1v2h-1zM527 193h1v2h-1zM527 183h5v1h-5zM527 195h5v1h-5zM532 186h1v7h-1zM531 184h1v2h-1zM531 193h1v2h-1zM533 184h1v2h-1zM533 193h1v2h-1zM533 183h5v1h-5zM533 195h5v1h-5zM538 186h1v7h-1zM537 184h1v2h-1zM537 193h1v2h-1zM539 184h1v2h-1zM539 193h1v2h-1zM539 183h4v1h-4zM539 195h4v1h-4zM543 186h1v7h-1zM542 184h1v2h-1zM542 193h1v2h-1zM544 184h1v2h-1zM544 193h1v2h-1zM544 183h23v1h-23zM544 195h23v1h-23zM567 186h1v7h-1zM566 184h1v2h-1zM566 193h1v2h-1zM568 184h1v2h-1zM568 193h1v2h-1zM568 183h10v1h-10zM568 195h10v1h-10zM578 186h1v7h-1zM577 184h1v2h-1zM577 193h1v2h-1zM579 184h1v2h-1zM579 193h1v2h-1zM579 183h11v1h-11zM579 195h11v1h-11zM590 186h1v7h-1zM589 184h1v2h-1zM589 193h1v2h-1zM591 184h1v2h-1zM591 193h1v2h-1zM591 183h5v1h-5zM591 195h5v1h-5zM596 186h1v7h-1zM595 184h1v2h-1zM595 193h1v2h-1zM597 184h1v2h-1zM597 193h1v2h-1zM597 183h5v1h-5zM597 195h5v1h-5zM602 186h1v7h-1zM601 184h1v2h-1zM601 193h1v2h-1zM603 184h1v2h-1zM603 193h1v2h-1zM603 183h10v1h-10zM603 195h10v1h-10zM613 186h1v7h-1zM612 184h1v2h-1zM612 193h1v2h-1zM614 184h1v2h-1zM614 193h1v2h-1zM614 183h11v1h-11zM614 195h11v1h-11zM625 186h1v7h-1zM624 184h1v2h-1zM624 193h1v2h-1zM626 184h1v2h-1zM626 193h1v2h-1zM626 183h5v1h-5zM626 195h5v1h-5zM631 186h1v7h-1zM630 184h1v2h-1zM630 193h1v2h-1zM632 184h1v2h-1zM632 193h1v2h-1zM632 183h4v1h-4zM632 195h4v1h-4zM636 186h1v7h-1zM635 184h1v2h-1zM635 193h1v2h-1zM637 184h1v2h-1zM637 193h1v2h-1zM637 183h5v1h-5zM637 195h5v1h-5zM642 186h1v7h-1zM641 184h1v2h-1zM641 193h1v2h-1zM643 184h1v2h-1zM643 193h1v2h-1zM643 183h5v1h-5zM643 195h5v1h-5zM648 186h1v7h-1zM647 184h1v2h-1zM647 193h1v2h-1zM649 184h1v2h-1zM649 193h1v2h-1zM649 183h5v1h-5zM649 195h5v1h-5zM654 186h1v7h-1zM653 184h1v2h-1zM653 193h1v2h-1zM655 184h1v2h-1zM655 193h1v2h-1zM655 183h5v1h-5zM655 195h5v1h-5zM660 186h1v7h-1zM659 184h1v2h-1zM659 193h1v2h-1zM661 184h1v2h-1zM661 193h1v2h-1zM661 183h22v1h-22zM661 195h22v1h-22zM683 186h1v7h-1zM682 184h1v2h-1zM682 193h1v2h-1zM684 184h1v2h-1zM684 193h1v2h-1zM684 183h11v1h-11zM684 195h11v1h-11zM695 186h1v7h-1zM694 184h1v2h-1zM694 193h1v2h-1zM696 184h1v2h-1zM696 193h1v2h-1zM696 183h10v1h-10zM696 195h10v1h-10zM706 186h1v7h-1zM705 184h1v2h-1zM705 193h1v2h-1zM707 184h1v2h-1zM707 193h1v2h-1zM707 183h11v1h-11zM707 195h11v1h-11zM718 186h1v7h-1zM717 184h1v2h-1zM717 193h1v2h-1zM719 184h1v2h-1zM719 193h1v2h-1zM719 183h5v1h-5zM719 195h5v1h-5zM724 186h1v7h-1zM723 184h1v2h-1zM723 193h1v2h-1zM725 184h1v2h-1zM725 193h1v2h-1zM725 183h4v1h-4zM725 195h4v1h-4zM729 186h1v7h-1zM728 184h1v2h-1zM728 193h1v2h-1zM730 184h1v2h-1zM730 193h1v2h-1zM730 183h11v1h-11zM730 195h11v1h-11zM741 186h1v7h-1zM740 184h1v2h-1zM740 193h1v2h-1zM742 184h1v2h-1zM742 193h1v2h-1zM742 183h11v1h-11zM742 195h11v1h-11zM753 186h1v7h-1zM752 184h1v2h-1zM752 193h1v2h-1zM754 184h1v2h-1zM754 193h1v2h-1zM754 183h5v1h-5zM754 195h5v1h-5zM759 186h1v7h-1zM758 184h1v2h-1zM758 193h1v2h-1zM760 184h1v2h-1zM760 193h1v2h-1zM760 183h4v1h-4zM760 195h4v1h-4zM764 186h1v7h-1zM763 184h1v2h-1zM763 193h1v2h-1zM765 184h1v2h-1zM765 193h1v2h-1zM765 183h11v1h-11zM765 195h11v1h-11zM776 186h1v7h-1zM775 184h1v2h-1zM775 193h1v2h-1zM777 184h1v2h-1zM777 193h1v2h-1zM777 183h22v1h-22zM777 195h22v1h-22zM799 186h1v7h-1zM798 184h1v2h-1zM798 193h1v2h-1zM800 184h1v2h-1zM800 193h1v2h-1zM800 183h11v1h-11zM800 195h11v1h-11zM811 186h1v7h-1zM810 184h1v2h-1zM810 193h1v2h-1zM812 184h1v2h-1zM812 193h1v2h-1zM812 183h11v1h-11zM812 195h11v1h-11zM823 186h1v7h-1zM822 184h1v2h-1zM822 193h1v2h-1zM824 184h1v2h-1zM824 193h1v2h-1zM824 183h10v1h-10zM824 195h10v1h-10zM834 186h1v7h-1zM833 184h1v2h-1zM833 193h1v2h-1zM835 184h1v2h-1zM835 193h1v2h-1zM835 183h11v1h-11zM835 195h11v1h-11zM846 186h1v7h-1zM845 184h1v2h-1zM845 193h1v2h-1zM847 184h1v2h-1zM847 193h1v2h-1zM847 183h10v1h-10zM847 195h10v1h-10zM857 186h1v7h-1zM856 184h1v2h-1zM856 193h1v2h-1zM858 184h1v2h-1zM858 193h1v2h-1zM858 183h11v1h-11zM858 195h11v1h-11zM869 186h1v7h-1zM868 184h1v2h-1zM868 193h1v2h-1zM870 184h1v2h-1zM870 193h1v2h-1zM870 183h5v1h-5zM870 195h5v1h-5zM875 186h1v7h-1zM874 184h1v2h-1zM874 193h1v2h-1zM876 184h1v2h-1zM876 193h1v2h-1zM876 183h5v1h-5zM876 195h5v1h-5zM881 186h1v7h-1zM880 184h1v2h-1zM880 193h1v2h-1zM882 184h1v2h-1zM882 193h1v2h-1zM882 183h5v1h-5zM882 195h5v1h-5zM887 186h1v7h-1zM886 184h1v2h-1zM886 193h1v2h-1zM888 184h1v2h-1zM888 193h1v2h-1zM888 183h4v1h-4zM888 195h4v1h-4zM892 186h1v7h-1zM891 184h1v2h-1zM891 193h1v2h-1zM893 184h1v2h-1zM893 193h1v2h-1zM893 183h23v1h-23zM893 195h23v1h-23zM916 186h1v7h-1zM915 184h1v2h-1zM915 193h1v2h-1zM917 184h1v2h-1zM917 193h1v2h-1zM917 183h10v1h-10zM917 195h10v1h-10zM927 186h1v7h-1zM926 184h1v2h-1zM926 193h1v2h-1zM928 184h1v2h-1zM928 193h1v2h-1zM928 183h11v1h-11zM928 195h11v1h-11zM939 186h1v7h-1zM938 184h1v2h-1zM938 193h1v2h-1zM940 184h1v2h-1zM940 193h1v2h-1zM940 183h5v1h-5zM940 195h5v1h-5zM945 186h1v7h-1zM944 184h1v2h-1zM944 193h1v2h-1zM946 184h1v2h-1zM946 193h1v2h-1zM946 183h5v1h-5zM946 195h5v1h-5zM951 186h1v7h-1zM950 184h1v2h-1zM950 193h1v2h-1zM952 184h1v2h-1zM952 193h1v2h-1zM952 183h10v1h-10zM952 195h10v1h-10zM962 186h1v7h-1zM961 184h1v2h-1zM961 193h1v2h-1zM963 184h1v2h-1zM963 193h1v2h-1zM963 183h5v1h-5zM963 195h5v1h-5zM968 186h1v7h-1zM967 184h1v2h-1zM967 193h1v2h-1zM969 184h1v2h-1zM969 193h1v2h-1zM969 183h5v1h-5zM969 195h5v1h-5zM974 186h1v7h-1zM973 184h1v2h-1zM973 193h1v2h-1zM975 184h1v2h-1zM975 193h1v2h-1zM975 183h10v1h-10zM975 195h10v1h-10zM985 186h1v7h-1zM984 184h1v2h-1zM984 193h1v2h-1zM986 184h1v2h-1zM986 193h1v2h-1zM986 183h11v1h-11zM986 195h11v1h-11zM997 186h1v7h-1zM996 184h1v2h-1zM996 193h1v2h-1zM998 184h1v2h-1zM998 193h1v2h-1zM998 183h11v1h-11zM998 195h11v1h-11zM1009 186h1v7h-1zM1008 184h1v2h-1zM1008 193h1v2h-1zM1010 184h1v2h-1zM1010 193h1v2h-1zM1010 183h22v1h-22zM1010 195h22v1h-22zM1032 186h1v7h-1zM1031 184h1v2h-1zM1031 193h1v2h-1zM1033 184h1v2h-1zM1033 193h1v2h-1zM1033 183h11v1h-11zM1033 195h11v1h-11zM1044 186h1v7h-1zM1043 184h1v2h-1zM1043 193h1v2h-1zM1045 184h1v2h-1zM1045 193h1v2h-1zM1045 183h10v1h-10zM1045 195h10v1h-10zM1055 186h1v7h-1zM1054 184h1v2h-1zM1054 193h1v2h-1zM1056 184h1v2h-1zM1056 193h1v2h-1zM1056 183h11v1h-11zM1056 195h11v1h-11zM1067 186h1v7h-1zM1066 184h1v2h-1zM1066 193h1v2h-1zM1068 184h1v2h-1zM1068 193h1v2h-1zM1068 183h10v1h-10zM1068 195h10v1h-10zM1078 186h1v7h-1zM1077 184h1v2h-1zM1077 193h1v2h-1zM1079 184h1v2h-1zM1079 193h1v2h-1zM1079 183h11v1h-11zM1079 195h11v1h-11zM1090 186h1v7h-1zM1089 184h1v2h-1zM1089 193h1v2h-1zM1091 184h1v2h-1zM1091 193h1v2h-1zM1091 183h5v1h-5zM1091 195h5v1h-5zM1096 186h1v7h-1zM1095 184h1v2h-1zM1095 193h1v2h-1zM1097 184h1v2h-1zM1097 193h1v2h-1zM1097 183h5v1h-5zM1097 195h5v1h-5zM1102 186h1v7h-1zM1101 184h1v2h-1zM1101 193h1v2h-1zM1103 184h1v2h-1zM1103 193h1v2h-1zM1103 183h5v1h-5zM1103 195h5v1h-5zM1108 186h1v7h-1zM1107 184h1v2h-1zM1107 193h1v2h-1zM1109 184h1v2h-1zM1109 193h1v2h-1zM1109 183h4v1h-4zM1109 195h4v1h-4zM1113 186h1v7h-1zM1112 184h1v2h-1zM1112 193h1v2h-1zM1114 184h1v2h-1zM1114 193h1v2h-1zM1114 183h11v1h-11zM1114 195h11v1h-11zM1125 186h1v7h-1zM1124 184h1v2h-1zM1124 193h1v2h-1zM1126 184h1v2h-1zM1126 193h1v2h-1zM1126 183h22v1h-22zM1126 195h22v1h-22zM1148 186h1v7h-1zM1147 184h1v2h-1zM1147 193h1v2h-1zM1149 184h1v2h-1zM1149 193h1v2h-1zM1149 183h11v1h-11zM1149 195h11v1h-11zM1160 186h1v7h-1zM1159 184h1v2h-1zM1159 193h1v2h-1zM1161 184h1v2h-1zM1161 193h1v2h-1zM1161 183h11v1h-11zM1161 195h11v1h-11zM1172 186h1v7h-1zM1171 184h1v2h-1zM1171 193h1v2h-1zM1173 184h1v2h-1zM1173 193h1v2h-1zM1173 183h10v1h-10zM1173 195h10v1h-10zM1183 186h1v7h-1zM1182 184h1v2h-1zM1182 193h1v2h-1zM1184 184h1v2h-1zM1184 193h1v2h-1zM1184 183h5v1h-5zM1184 195h5v1h-5zM1189 186h1v7h-1zM1188 184h1v2h-1zM1188 193h1v2h-1zM1190 184h1v2h-1zM1190 193h1v2h-1zM1190 183h5v1h-5zM1190 195h5v1h-5zM1195 186h1v7h-1zM1194 184h1v2h-1zM1194 193h1v2h-1zM1196 184h1v2h-1zM1196 193h1v2h-1zM1196 183h5v1h-5zM1196 195h5v1h-5zM1201 186h1v7h-1zM1200 184h1v2h-1zM1200 193h1v2h-1zM1202 184h1v2h-1zM1202 193h1v2h-1zM1202 183h4v1h-4zM1202 195h4v1h-4zM1206 186h1v7h-1zM1205 184h1v2h-1zM1205 193h1v2h-1zM1207 184h1v2h-1zM1207 193h1v2h-1zM1207 183h11v1h-11zM1207 195h11v1h-11zM1218 186h1v7h-1zM1217 184h1v2h-1zM1217 193h1v2h-1zM1219 184h1v2h-1zM1219 193h1v2h-1zM1219 183h11v1h-11zM1219 195h11v1h-11zM1230 186h1v7h-1zM1229 184h1v2h-1zM1229 193h1v2h-1zM1231 184h1v2h-1zM1231 193h1v2h-1zM1231 183h10v1h-10zM1231 195h10v1h-10zM1241 186h1v7h-1zM1240 184h1v2h-1zM1240 193h1v2h-1zM1242 184h1v2h-1zM1242 193h1v2h-1zM1242 183h23v1h-23zM1242 195h23v1h-23zM1265 186h1v7h-1zM1264 184h1v2h-1zM1264 193h1v2h-1zM1266 184h1v2h-1zM1266 193h1v2h-1zM1266 183h10v1h-10zM1266 195h10v1h-10zM1276 186h1v7h-1zM1275 184h1v2h-1zM1275 193h1v2h-1zM1277 184h1v2h-1zM1277 193h1v2h-1zM1277 183h11v1h-11zM1277 195h11v1h-11zM1288 186h1v7h-1zM1287 184h1v2h-1zM1287 193h1v2h-1zM1289 184h1v2h-1zM1289 193h1v2h-1zM1289 183h11v1h-11zM1289 195h11v1h-11zM1300 186h1v7h-1zM1299 184h1v2h-1zM1299 193h1v2h-1zM1301 184h1v2h-1zM1301 193h1v2h-1zM1301 183h10v1h-10zM1301 195h10v1h-10zM1311 186h1v7h-1zM1310 184h1v2h-1zM1310 193h1v2h-1zM1312 184h1v2h-1zM1312 193h1v2h-1zM1312 183h11v1h-11zM1312 195h11v1h-11zM1323 186h1v7h-1zM1322 184h1v2h-1zM1322 193h1v2h-1zM1324 184h1v2h-1zM1324 193h1v2h-1zM1324 183h3v1h-3zM1324 195h3v1h-3zM271 200h63v1h-63zM271 212h63v1h-63zM334 203h1v7h-1zM333 201h1v2h-1zM333 210h1v2h-1zM335 201h1v2h-1zM335 210h1v2h-1zM335 200h115v1h-115zM335 212h115v1h-115zM450 203h1v7h-1zM449 201h1v2h-1zM449 210h1v2h-1zM451 201h1v2h-1zM451 210h1v2h-1zM451 200h116v1h-116zM451 212h116v1h-116zM567 203h1v7h-1zM566 201h1v2h-1zM566 210h1v2h-1zM568 201h1v2h-1zM568 210h1v2h-1zM568 200h115v1h-115zM568 212h115v1h-115zM683 203h1v7h-1zM682 201h1v2h-1zM682 210h1v2h-1zM684 201h1v2h-1zM684 210h1v2h-1zM684 200h115v1h-115zM684 212h115v1h-115zM799 203h1v7h-1zM798 201h1v2h-1zM798 210h1v2h-1zM800 201h1v2h-1zM800 210h1v2h-1zM800 200h116v1h-116zM800 212h116v1h-116zM916 203h1v7h-1zM915 201h1v2h-1zM915 210h1v2h-1zM917 201h1v2h-1zM917 210h1v2h-1zM917 200h115v1h-115zM917 212h115v1h-115zM1032 203h1v7h-1zM1031 201h1v2h-1zM1031 210h1v2h-1zM1033 201h1v2h-1zM1033 210h1v2h-1zM1033 200h115v1h-115zM1033 212h115v1h-115zM1148 203h1v7h-1zM1147 201h1v2h-1zM1147 210h1v2h-1zM1149 201h1v2h-1zM1149 210h1v2h-1zM1149 200h116v1h-116zM1149 212h116v1h-116zM1265 203h1v7h-1zM1264 201h1v2h-1zM1264 210h1v2h-1zM1266 201h1v2h-1zM1266 210h1v2h-1zM1266 200h61v1h-61zM1266 212h61v1h-61zM271 217h63v1h-63zM271 229h63v1h-63zM334 220h1v7h-1zM333 218h1v2h-1zM333 227h1v2h-1zM335 218h1v2h-1zM335 227h1v2h-1zM335 217h115v1h-115zM335 229h115v1h-115zM450 220h1v7h-1zM449 218h1v2h-1zM449 227h1v2h-1zM451 218h1v2h-1zM451 227h1v2h-1zM451 217h116v1h-116zM451 229h116v1h-116zM567 220h1v7h-1zM566 218h1v2h-1zM566 227h1v2h-1zM568 218h1v2h-1zM568 227h1v2h-1zM568 217h115v1h-115zM568 229h115v1h-115zM683 220h1v7h-1zM682 218h1v2h-1zM682 227h1v2h-1zM684 218h1v2h-1zM684 227h1v2h-1zM684 217h115v1h-115zM684 229h115v1h-115zM799 220h1v7h-1zM798 218h1v2h-1zM798 227h1v2h-1zM800 218h1v2h-1zM800 227h1v2h-1zM800 217h116v1h-116zM800 229h116v1h-116zM916 220h1v7h-1zM915 218h1v2h-1zM915 227h1v2h-1zM917 218h1v2h-1zM917 227h1v2h-1zM917 217h115v1h-115zM917 229h115v1h-115zM1032 220h1v7h-1zM1031 218h1v2h-1zM1031 227h1v2h-1zM1033 218h1v2h-1zM1033 227h1v2h-1zM1033 217h115v1h-115zM1033 229h115v1h-115zM1148 220h1v7h-1zM1147 218h1v2h-1zM1147 227h1v2h-1zM1149 218h1v2h-1zM1149 227h1v2h-1zM1149 217h116v1h-116zM1149 229h116v1h-116zM1265 220h1v7h-1zM1264 218h1v2h-1zM1264 227h1v2h-1zM1266 218h1v2h-1zM1266 227h1v2h-1zM1266 217h61v1h-61zM1266 229h61v1h-61zM271 234h5v1h-5zM271 246h5v1h-5zM276 237h1v7h-1zM275 235h1v2h-1zM275 244h1v2h-1zM277 235h1v2h-1zM277 244h1v2h-1zM277 234h10v1h-10zM277 246h10v1h-10zM287 237h1v7h-1zM286 235h1v2h-1zM286 244h1v2h-1zM288 235h1v2h-1zM288 244h1v2h-1zM288 234h11v1h-11zM288 246h11v1h-11zM299 237h1v7h-1zM298 235h1v2h-1zM298 244h1v2h-1zM300 235h1v2h-1zM300 244h1v2h-1zM300 234h11v1h-11zM300 246h11v1h-11zM311 237h1v7h-1zM310 235h1v2h-1zM310 244h1v2h-1zM312 235h1v2h-1zM312 244h1v2h-1zM312 234h5v1h-5zM312 246h5v1h-5zM317 237h1v7h-1zM316 235h1v2h-1zM316 244h1v2h-1zM318 235h1v2h-1zM318 244h1v2h-1zM318 234h28v1h-28zM318 246h28v1h-28zM346 237h1v7h-1zM345 235h1v2h-1zM345 244h1v2h-1zM347 235h1v2h-1zM347 244h1v2h-1zM347 234h10v1h-10zM347 246h10v1h-10zM357 237h1v7h-1zM356 235h1v2h-1zM356 244h1v2h-1zM358 235h1v2h-1zM358 244h1v2h-1zM358 234h11v1h-11zM358 246h11v1h-11zM369 237h1v7h-1zM368 235h1v2h-1zM368 244h1v2h-1zM370 235h1v2h-1zM370 244h1v2h-1zM370 234h11v1h-11zM370 246h11v1h-11zM381 237h1v7h-1zM380 235h1v2h-1zM380 244h1v2h-1zM382 235h1v2h-1zM382 244h1v2h-1zM382 234h10v1h-10zM382 246h10v1h-10zM392 237h1v7h-1zM391 235h1v2h-1zM391 244h1v2h-1zM393 235h1v2h-1zM393 244h1v2h-1zM393 234h11v1h-11zM393 246h11v1h-11zM404 237h1v7h-1zM403 235h1v2h-1zM403 244h1v2h-1zM405 235h1v2h-1zM405 244h1v2h-1zM405 234h10v1h-10zM405 246h10v1h-10zM415 237h1v7h-1zM414 235h1v2h-1zM414 244h1v2h-1zM416 235h1v2h-1zM416 244h1v2h-1zM416 234h11v1h-11zM416 246h11v1h-11zM427 237h1v7h-1zM426 235h1v2h-1zM426 244h1v2h-1zM428 235h1v2h-1zM428 244h1v2h-1zM428 234h5v1h-5zM428 246h5v1h-5zM433 237h1v7h-1zM432 235h1v2h-1zM432 244h1v2h-1zM434 235h1v2h-1zM434 244h1v2h-1zM434 234h28v1h-28zM434 246h28v1h-28zM462 237h1v7h-1zM461 235h1v2h-1zM461 244h1v2h-1zM463 235h1v2h-1zM463 244h1v2h-1zM463 234h11v1h-11zM463 246h11v1h-11zM474 237h1v7h-1zM473 235h1v2h-1zM473 244h1v2h-1zM475 235h1v2h-1zM475 244h1v2h-1zM475 234h10v1h-10zM475 246h10v1h-10zM485 237h1v7h-1zM484 235h1v2h-1zM484 244h1v2h-1zM486 235h1v2h-1zM486 244h1v2h-1zM486 234h11v1h-11zM486 246h11v1h-11zM497 237h1v7h-1zM496 235h1v2h-1zM496 244h1v2h-1zM498 235h1v2h-1zM498 244h1v2h-1zM498 234h10v1h-10zM498 246h10v1h-10zM508 237h1v7h-1zM507 235h1v2h-1zM507 244h1v2h-1zM509 235h1v2h-1zM509 244h1v2h-1zM509 234h11v1h-11zM509 246h11v1h-11zM520 237h1v7h-1zM519 235h1v2h-1zM519 244h1v2h-1zM521 235h1v2h-1zM521 244h1v2h-1zM521 234h11v1h-11zM521 246h11v1h-11zM532 237h1v7h-1zM531 235h1v2h-1zM531 244h1v2h-1zM533 235h1v2h-1zM533 244h1v2h-1zM533 234h10v1h-10zM533 246h10v1h-10zM543 237h1v7h-1zM542 235h1v2h-1zM542 244h1v2h-1zM544 235h1v2h-1zM544 244h1v2h-1zM544 234h5v1h-5zM544 246h5v1h-5zM549 237h1v7h-1zM548 235h1v2h-1zM548 244h1v2h-1zM550 235h1v2h-1zM550 244h1v2h-1zM550 234h28v1h-28zM550 246h28v1h-28zM578 237h1v7h-1zM577 235h1v2h-1zM577 244h1v2h-1zM579 235h1v2h-1zM579 244h1v2h-1zM579 234h11v1h-11zM579 246h11v1h-11zM590 237h1v7h-1zM589 235h1v2h-1zM589 244h1v2h-1zM591 235h1v2h-1zM591 244h1v2h-1zM591 234h11v1h-11zM591 246h11v1h-11zM602 237h1v7h-1zM601 235h1v2h-1zM601 244h1v2h-1zM603 235h1v2h-1zM603 244h1v2h-1zM603 234h10v1h-10zM603 246h10v1h-10zM613 237h1v7h-1zM612 235h1v2h-1zM612 244h1v2h-1zM614 235h1v2h-1zM614 244h1v2h-1zM614 234h11v1h-11zM614 246h11v1h-11zM625 237h1v7h-1zM624 235h1v2h-1zM624 244h1v2h-1zM626 235h1v2h-1zM626 244h1v2h-1zM626 234h10v1h-10zM626 246h10v1h-10zM636 237h1v7h-1zM635 235h1v2h-1zM635 244h1v2h-1zM637 235h1v2h-1zM637 244h1v2h-1zM637 234h11v1h-11zM637 246h11v1h-11zM648 237h1v7h-1zM647 235h1v2h-1zM647 244h1v2h-1zM649 235h1v2h-1zM649 244h1v2h-1zM649 234h11v1h-11zM649 246h11v1h-11zM660 237h1v7h-1zM659 235h1v2h-1zM659 244h1v2h-1zM661 235h1v2h-1zM661 244h1v2h-1zM661 234h5v1h-5zM661 246h5v1h-5zM666 237h1v7h-1zM665 235h1v2h-1zM665 244h1v2h-1zM667 235h1v2h-1zM667 244h1v2h-1zM667 234h28v1h-28zM667 246h28v1h-28zM695 237h1v7h-1zM694 235h1v2h-1zM694 244h1v2h-1zM696 235h1v2h-1zM696 244h1v2h-1zM696 234h10v1h-10zM696 246h10v1h-10zM706 237h1v7h-1zM705 235h1v2h-1zM705 244h1v2h-1zM707 235h1v2h-1zM707 244h1v2h-1zM707 234h11v1h-11zM707 246h11v1h-11zM718 237h1v7h-1zM717 235h1v2h-1zM717 244h1v2h-1zM719 235h1v2h-1zM719 244h1v2h-1zM719 234h10v1h-10zM719 246h10v1h-10zM729 237h1v7h-1zM728 235h1v2h-1zM728 244h1v2h-1zM730 235h1v2h-1zM730 244h1v2h-1zM730 234h11v1h-11zM730 246h11v1h-11zM741 237h1v7h-1zM740 235h1v2h-1zM740 244h1v2h-1zM742 235h1v2h-1zM742 244h1v2h-1zM742 234h11v1h-11zM742 246h11v1h-11zM753 237h1v7h-1zM752 235h1v2h-1zM752 244h1v2h-1zM754 235h1v2h-1zM754 244h1v2h-1zM754 234h10v1h-10zM754 246h10v1h-10zM764 237h1v7h-1zM763 235h1v2h-1zM763 244h1v2h-1zM765 235h1v2h-1zM765 244h1v2h-1zM765 234h11v1h-11zM765 246h11v1h-11zM776 237h1v7h-1zM775 235h1v2h-1zM775 244h1v2h-1zM777 235h1v2h-1zM777 244h1v2h-1zM777 234h5v1h-5zM777 246h5v1h-5zM782 237h1v7h-1zM781 235h1v2h-1zM781 244h1v2h-1zM783 235h1v2h-1zM783 244h1v2h-1zM783 234h28v1h-28zM783 246h28v1h-28zM811 237h1v7h-1zM810 235h1v2h-1zM810 244h1v2h-1zM812 235h1v2h-1zM812 244h1v2h-1zM812 234h11v1h-11zM812 246h11v1h-11zM823 237h1v7h-1zM822 235h1v2h-1zM822 244h1v2h-1zM824 235h1v2h-1zM824 244h1v2h-1zM824 234h10v1h-10zM824 246h10v1h-10zM834 237h1v7h-1zM833 235h1v2h-1zM833 244h1v2h-1zM835 235h1v2h-1zM835 244h1v2h-1zM835 234h11v1h-11zM835 246h11v1h-11zM846 237h1v7h-1zM845 235h1v2h-1zM845 244h1v2h-1zM847 235h1v2h-1zM847 244h1v2h-1zM847 234h10v1h-10zM847 246h10v1h-10zM857 237h1v7h-1zM856 235h1v2h-1zM856 244h1v2h-1zM858 235h1v2h-1zM858 244h1v2h-1zM858 234h11v1h-11zM858 246h11v1h-11zM869 237h1v7h-1zM868 235h1v2h-1zM868 244h1v2h-1zM870 235h1v2h-1zM870 244h1v2h-1zM870 234h11v1h-11zM870 246h11v1h-11zM881 237h1v7h-1zM880 235h1v2h-1zM880 244h1v2h-1zM882 235h1v2h-1zM882 244h1v2h-1zM882 234h10v1h-10zM882 246h10v1h-10zM892 237h1v7h-1zM891 235h1v2h-1zM891 244h1v2h-1zM893 235h1v2h-1zM893 244h1v2h-1zM893 234h5v1h-5zM893 246h5v1h-5zM898 237h1v7h-1zM897 235h1v2h-1zM897 244h1v2h-1zM899 235h1v2h-1zM899 244h1v2h-1zM899 234h28v1h-28zM899 246h28v1h-28zM927 237h1v7h-1zM926 235h1v2h-1zM926 244h1v2h-1zM928 235h1v2h-1zM928 244h1v2h-1zM928 234h11v1h-11zM928 246h11v1h-11zM939 237h1v7h-1zM938 235h1v2h-1zM938 244h1v2h-1zM940 235h1v2h-1zM940 244h1v2h-1zM940 234h11v1h-11zM940 246h11v1h-11zM951 237h1v7h-1zM950 235h1v2h-1zM950 244h1v2h-1zM952 235h1v2h-1zM952 244h1v2h-1zM952 234h10v1h-10zM952 246h10v1h-10zM962 237h1v7h-1zM961 235h1v2h-1zM961 244h1v2h-1zM963 235h1v2h-1zM963 244h1v2h-1zM963 234h11v1h-11zM963 246h11v1h-11zM974 237h1v7h-1zM973 235h1v2h-1zM973 244h1v2h-1zM975 235h1v2h-1zM975 244h1v2h-1zM975 234h10v1h-10zM975 246h10v1h-10zM985 237h1v7h-1zM984 235h1v2h-1zM984 244h1v2h-1zM986 235h1v2h-1zM986 244h1v2h-1zM986 234h11v1h-11zM986 246h11v1h-11zM997 237h1v7h-1zM996 235h1v2h-1zM996 244h1v2h-1zM998 235h1v2h-1zM998 244h1v2h-1zM998 234h11v1h-11zM998 246h11v1h-11zM1009 237h1v7h-1zM1008 235h1v2h-1zM1008 244h1v2h-1zM1010 235h1v2h-1zM1010 244h1v2h-1zM1010 234h5v1h-5zM1010 246h5v1h-5zM1015 237h1v7h-1zM1014 235h1v2h-1zM1014 244h1v2h-1zM1016 235h1v2h-1zM1016 244h1v2h-1zM1016 234h28v1h-28zM1016 246h28v1h-28zM1044 237h1v7h-1zM1043 235h1v2h-1zM1043 244h1v2h-1zM1045 235h1v2h-1zM1045 244h1v2h-1zM1045 234h10v1h-10zM1045 246h10v1h-10zM1055 237h1v7h-1zM1054 235h1v2h-1zM1054 244h1v2h-1zM1056 235h1v2h-1zM1056 244h1v2h-1zM1056 234h11v1h-11zM1056 246h11v1h-11zM1067 237h1v7h-1zM1066 235h1v2h-1zM1066 244h1v2h-1zM1068 235h1v2h-1zM1068 244h1v2h-1zM1068 234h10v1h-10zM1068 246h10v1h-10zM1078 237h1v7h-1zM1077 235h1v2h-1zM1077 244h1v2h-1zM1079 235h1v2h-1zM1079 244h1v2h-1zM1079 234h11v1h-11zM1079 246h11v1h-11zM1090 237h1v7h-1zM1089 235h1v2h-1zM1089 244h1v2h-1zM1091 235h1v2h-1zM1091 244h1v2h-1zM1091 234h11v1h-11zM1091 246h11v1h-11zM1102 237h1v7h-1zM1101 235h1v2h-1zM1101 244h1v2h-1zM1103 235h1v2h-1zM1103 244h1v2h-1zM1103 234h10v1h-10zM1103 246h10v1h-10zM1113 237h1v7h-1zM1112 235h1v2h-1zM1112 244h1v2h-1zM1114 235h1v2h-1zM1114 244h1v2h-1zM1114 234h11v1h-11zM1114 246h11v1h-11zM1125 237h1v7h-1zM1124 235h1v2h-1zM1124 244h1v2h-1zM1126 235h1v2h-1zM1126 244h1v2h-1zM1126 234h5v1h-5zM1126 246h5v1h-5zM1131 237h1v7h-1zM1130 235h1v2h-1zM1130 244h1v2h-1zM1132 235h1v2h-1zM1132 244h1v2h-1zM1132 234h28v1h-28zM1132 246h28v1h-28zM1160 237h1v7h-1zM1159 235h1v2h-1zM1159 244h1v2h-1zM1161 235h1v2h-1zM1161 244h1v2h-1zM1161 234h11v1h-11zM1161 246h11v1h-11zM1172 237h1v7h-1zM1171 235h1v2h-1zM1171 244h1v2h-1zM1173 235h1v2h-1zM1173 244h1v2h-1zM1173 234h10v1h-10zM1173 246h10v1h-10zM1183 237h1v7h-1zM1182 235h1v2h-1zM1182 244h1v2h-1zM1184 235h1v2h-1zM1184 244h1v2h-1zM1184 234h11v1h-11zM1184 246h11v1h-11zM1195 237h1v7h-1zM1194 235h1v2h-1zM1194 244h1v2h-1zM1196 235h1v2h-1zM1196 244h1v2h-1zM1196 234h10v1h-10zM1196 246h10v1h-10zM1206 237h1v7h-1zM1205 235h1v2h-1zM1205 244h1v2h-1zM1207 235h1v2h-1zM1207 244h1v2h-1zM1207 234h11v1h-11zM1207 246h11v1h-11zM1218 237h1v7h-1zM1217 235h1v2h-1zM1217 244h1v2h-1zM1219 235h1v2h-1zM1219 244h1v2h-1zM1219 234h11v1h-11zM1219 246h11v1h-11zM1230 237h1v7h-1zM1229 235h1v2h-1zM1229 244h1v2h-1zM1231 235h1v2h-1zM1231 244h1v2h-1zM1231 234h10v1h-10zM1231 246h10v1h-10zM1241 237h1v7h-1zM1240 235h1v2h-1zM1240 244h1v2h-1zM1242 235h1v2h-1zM1242 244h1v2h-1zM1242 234h5v1h-5zM1242 246h5v1h-5zM1247 237h1v7h-1zM1246 235h1v2h-1zM1246 244h1v2h-1zM1248 235h1v2h-1zM1248 244h1v2h-1zM1248 234h28v1h-28zM1248 246h28v1h-28zM1276 237h1v7h-1zM1275 235h1v2h-1zM1275 244h1v2h-1zM1277 235h1v2h-1zM1277 244h1v2h-1zM1277 234h11v1h-11zM1277 246h11v1h-11zM1288 237h1v7h-1zM1287 235h1v2h-1zM1287 244h1v2h-1zM1289 235h1v2h-1zM1289 244h1v2h-1zM1289 234h11v1h-11zM1289 246h11v1h-11zM1300 237h1v7h-1zM1299 235h1v2h-1zM1299 244h1v2h-1zM1301 235h1v2h-1zM1301 244h1v2h-1zM1301 234h10v1h-10zM1301 246h10v1h-10zM1311 237h1v7h-1zM1310 235h1v2h-1zM1310 244h1v2h-1zM1312 235h1v2h-1zM1312 244h1v2h-1zM1312 234h11v1h-11zM1312 246h11v1h-11zM1323 237h1v7h-1zM1322 235h1v2h-1zM1322 244h1v2h-1zM1324 235h1v2h-1zM1324 244h1v2h-1zM1324 234h3v1h-3zM1324 246h3v1h-3zM271 251h168v1h-168zM271 263h168v1h-168zM439 254h1v7h-1zM438 252h1v2h-1zM438 261h1v2h-1zM440 252h1v2h-1zM440 261h1v2h-1zM440 251h115v1h-115zM440 263h115v1h-115zM555 254h1v7h-1zM554 252h1v2h-1zM554 261h1v2h-1zM556 252h1v2h-1zM556 261h1v2h-1zM556 251h115v1h-115zM556 263h115v1h-115zM671 254h1v7h-1zM670 252h1v2h-1zM670 261h1v2h-1zM672 252h1v2h-1zM672 261h1v2h-1zM672 251h116v1h-116zM672 263h116v1h-116zM788 254h1v7h-1zM787 252h1v2h-1zM787 261h1v2h-1zM789 252h1v2h-1zM789 261h1v2h-1zM789 251h115v1h-115zM789 263h115v1h-115zM904 254h1v7h-1zM903 252h1v2h-1zM903 261h1v2h-1zM905 252h1v2h-1zM905 261h1v2h-1zM905 251h115v1h-115zM905 263h115v1h-115zM1020 254h1v7h-1zM1019 252h1v2h-1zM1019 261h1v2h-1zM1021 252h1v2h-1zM1021 261h1v2h-1zM1021 251h116v1h-116zM1021 263h116v1h-116zM1137 254h1v7h-1zM1136 252h1v2h-1zM1136 261h1v2h-1zM1138 252h1v2h-1zM1138 261h1v2h-1zM1138 251h115v1h-115zM1138 263h115v1h-115zM1253 254h1v7h-1zM1252 252h1v2h-1zM1252 261h1v2h-1zM1254 252h1v2h-1zM1254 261h1v2h-1zM1254 251h73v1h-73zM1254 263h73v1h-73z"/>
<path fill="#30ff18" d="M279 622h1v4h-1zM302 622h1v4h-1zM325 619h1v7h-1zM349 622h1v4h-1zM372 622h1v4h-1zM395 622h1v4h-1zM418 622h1v4h-1zM442 619h1v7h-1zM465 622h1v4h-1zM488 622h1v4h-1zM511 622h1v4h-1zM535 622h1v4h-1zM558 619h1v7h-1zM581 622h1v4h-1zM604 622h1v4h-1zM628 622h1v4h-1zM651 622h1v4h-1zM674 619h1v7h-1zM698 622h1v4h-1zM721 622h1v4h-1zM744 622h1v4h-1zM767 622h1v4h-1zM791 619h1v7h-1zM814 622h1v4h-1zM837 622h1v4h-1zM860 622h1v4h-1zM884 622h1v4h-1zM907 619h1v7h-1zM930 622h1v4h-1zM953 622h1v4h-1zM977 622h1v4h-1zM1000 622h1v4h-1zM1023 619h1v7h-1zM1046 622h1v4h-1zM1070 622h1v4h-1zM1093 622h1v4h-1zM1116 622h1v4h-1zM1140 619h1v7h-1zM1163 622h1v4h-1zM1186 622h1v4h-1zM1209 622h1v4h-1zM1233 622h1v4h-1zM1256 619h1v7h-1zM1279 622h1v4h-1zM1302 622h1v4h-1zM1326 622h1v4h-1z"/>
<path fill="#808080" d="M271 641h1056v1h-1056z"/>
<g font-family='"DejaVu Sans Condensed","DejaVu Sans","Liberation Sans",sans-serif' font-size="11" style="font-stretch:condensed;letter-spacing:-0.35px" text-rendering="geometricPrecision"><text x="275" y="109" fill="#fff" text-anchor="start">0</text><text x="330" y="109" fill="#fff" text-anchor="start">48</text><text x="447" y="109" fill="#fff" text-anchor="start">60</text><text x="563" y="109" fill="#fff" text-anchor="start">88</text><text x="679" y="109" fill="#fff" text-anchor="start">12</text><text x="796" y="109" fill="#fff" text-anchor="start">76</text><text x="912" y="109" fill="#fff" text-anchor="start">84</text><text x="1028" y="109" fill="#fff" text-anchor="start">32</text><text x="1145" y="109" fill="#fff" text-anchor="start">52</text><text x="1261" y="109" fill="#fff" text-anchor="start">28</text><text x="275" y="126" fill="#fff" text-anchor="start">0</text><text x="330" y="126" fill="#fff" text-anchor="start">40</text><text x="447" y="126" fill="#fff" text-anchor="start">68</text><text x="563" y="126" fill="#fff" text-anchor="start">92</text><text x="679" y="126" fill="#fff" text-anchor="start">56</text><text x="796" y="126" fill="#fff" text-anchor="start">64</text><text x="912" y="126" fill="#fff" text-anchor="start">12</text><text x="1028" y="126" fill="#fff" text-anchor="start">32</text><text x="1145" y="126" fill="#fff" text-anchor="start">8</text><text x="1261" y="126" fill="#fff" text-anchor="start">64</text><text x="275" y="143" fill="#fff" text-anchor="start">0</text><text x="444" y="143" fill="#fff" text-anchor="start">1920</text><text x="560" y="143" fill="#fff" text-anchor="start">4080</text><text x="676" y="143" fill="#fff" text-anchor="start">8096</text><text x="793" y="143" fill="#fff" text-anchor="start">672</text><text x="909" y="143" fill="#fff" text-anchor="start">4864</text><text x="1025" y="143" fill="#fff" text-anchor="start">1008</text><text x="1142" y="143" fill="#fff" text-anchor="start">1024</text><text x="1258" y="143" fill="#fff" text-anchor="start">416</text><text x="275" y="194" fill="#fff" text-anchor="start">00000</text><text x="275" y="211" fill="#fff" text-anchor="start">00</text><text x="339" y="211" fill="#fff" text-anchor="start">30</text><text x="455" y="211" fill="#fff" text-anchor="start">3c</text><text x="572" y="211" fill="#fff" text-anchor="start">58</text><text x="688" y="211" fill="#fff" text-anchor="start">0c</text><text x="804" y="211" fill="#fff" text-anchor="start">4c</text><text x="921" y="211" fill="#fff" text-anchor="start">54</text><text x="1037" y="211" fill="#fff" text-anchor="start">20</text><text x="1153" y="211" fill="#fff" text-anchor="start">34</text><text x="1270" y="211" fill="#fff" text-anchor="start">1c</text><text x="275" y="228" fill="#fff" text-anchor="start">00</text><text x="339" y="228" fill="#fff" text-anchor="start">d0</text><text x="455" y="228" fill="#fff" text-anchor="start">c4</text><text x="572" y="228" fill="#fff" text-anchor="start">a8</text><text x="688" y="228" fill="#fff" text-anchor="start">f4</text><text x="804" y="228" fill="#fff" text-anchor="start">b4</text><text x="921" y="228" fill="#fff" text-anchor="start">ac</text><text x="1037" y="228" fill="#fff" text-anchor="start">e0</text><text x="1153" y="228" fill="#fff" text-anchor="start">cc</text><text x="1270" y="228" fill="#fff" text-anchor="start">e4</text><text x="322" y="245" fill="#fff" text-anchor="start">00</text><text x="438" y="245" fill="#fff" text-anchor="start">00</text><text x="554" y="245" fill="#fff" text-anchor="start">00</text><text x="671" y="245" fill="#fff" text-anchor="start">00</text><text x="787" y="245" fill="#fff" text-anchor="start">00</text><text x="903" y="245" fill="#fff" text-anchor="start">00</text><text x="1020" y="245" fill="#fff" text-anchor="start">00</text><text x="1136" y="245" fill="#fff" text-anchor="start">00</text><text x="1252" y="245" fill="#fff" text-anchor="start">00</text><text x="275" y="262" fill="#fff" text-anchor="start">00000</text><text x="444" y="262" fill="#fff" text-anchor="start">00f00</text><text x="560" y="262" fill="#fff" text-anchor="start">01fe0</text><text x="676" y="262" fill="#fff" text-anchor="start">03f40</text><text x="793" y="262" fill="#fff" text-anchor="start">00540</text><text x="909" y="262" fill="#fff" text-anchor="start">02600</text><text x="1025" y="262" fill="#fff" text-anchor="start">007e0</text><text x="1142" y="262" fill="#fff" text-anchor="start">00800</text><text x="1258" y="262" fill="#fff" text-anchor="start">00340</text><text x="442.5" y="639" fill="#30ff18" text-anchor="middle">400 ns</text><text x="674.5" y="639" fill="#30ff18" text-anchor="middle">800 ns</text><text x="907.5" y="639" fill="#30ff18" text-anchor="middle">1200 ns</text><text x="1140.5" y="639" fill="#30ff18" text-anchor="middle">1600 ns</text></g>
</svg>
</div></body></html>
